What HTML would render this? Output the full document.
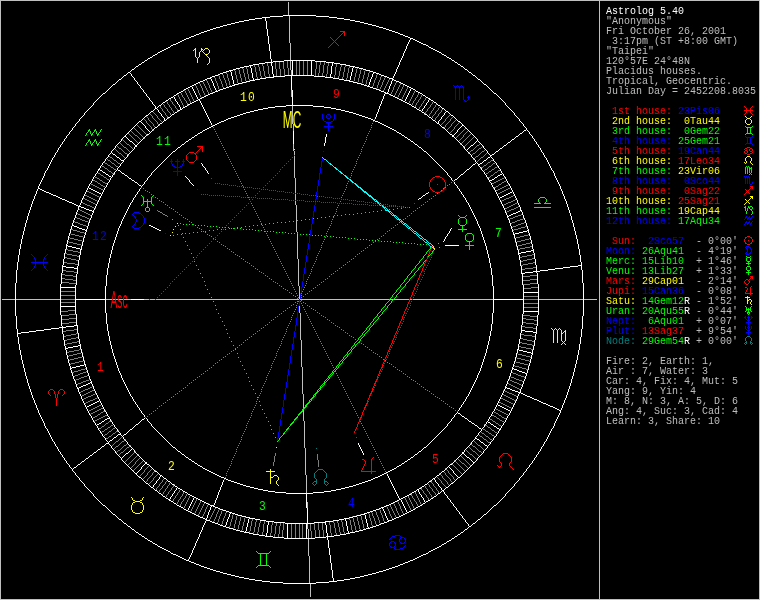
<!DOCTYPE html>
<html lang="en"><head><meta charset="utf-8"><title>Astrolog 5.40 - Anonymous, Taipei</title>
<style>
html,body{margin:0;padding:0;background:#000;}
body{width:760px;height:600px;overflow:hidden;position:relative;}
#chart{position:absolute;left:0;top:0;width:760px;height:600px;display:block;will-change:transform;}
#chart path{fill:none;stroke-width:1;shape-rendering:crispEdges;}
#chart path.h{transform:translate(0,.5px);}
#chart path.v{transform:translate(.5px,0);}
#chart text{font-family:"Liberation Mono",monospace;text-anchor:middle;}
#chart text.hn{font-size:13.3px;}
#chart text.cu{font-family:"Liberation Sans",sans-serif;font-size:23.7px;}
#side{position:absolute;left:606px;top:0;width:154px;height:600px;will-change:transform;}
.r{position:absolute;left:0;white-space:pre;font-family:"Liberation Mono",monospace;font-size:10.6px;line-height:10px;height:10px;
transform-origin:0 0;transform:translateY(2px) scaleX(0.9434);color:#bfbfbf;}
</style></head><body>
<svg id="chart" width="760" height="600" viewBox="0 0 760 600">
<rect width="760" height="600" fill="#000"/>
<path class="h" stroke="#007f7f" d="M747 336h3M745 342h2M750 342h2M318 469h5M314 481h3M324 481h3"/>
<path class="v" stroke="#007f7f" d="M312 483v1M313 482v1M313 484v1M314 473v5M314 485v1M315 472v1M315 478v1M315 484v1M316 448v1M316 471v1M316 479v2M316 482v2M317 470v1M323 470v1M324 471v1M324 479v2M324 482v2M325 472v1M325 478v1M325 484v1M326 473v5M326 485v1M327 482v1M327 484v1M328 483v1M744 343v1M745 338v3M745 344v1M746 337v1M746 341v1M746 343v1M750 337v1M750 341v1M750 343v1M751 338v3M751 344v1M752 343v1"/>
<path class="h" stroke="#bfbfbf" d="M0 0h760M2 299h13M16 299h44M106 299h25M144 299h5M150 299h5M156 299h143M300 299h89M390 299h3M394 299h15M410 299h2M413 299h80M539 299h44M584 299h13M0 599h760"/>
<path class="v" stroke="#bfbfbf" d="M0 1v598M288 2v13M289 16v27M290 43v17M290 61v9M291 70v5M291 90v7M292 106v18M293 124v7M293 144v7M294 151v4M294 156v22M295 178v15M295 194v6M295 201v4M296 205v27M297 232v1M297 234v25M298 259v27M299 286v13M299 306v7M300 313v27M301 340v27M302 367v27M303 394v14M303 410v11M304 421v27M305 448v27M306 475v18M307 502v6M307 524v5M308 529v9M308 539v17M309 556v27M310 584v13M599 1v598M759 1v598"/>
<path class="h" stroke="#7f7f7f" d="M135 135h2M127 144h2M477 145h2M124 147h2M119 148h2M479 148h2M471 150h2M482 151h2M119 153h2M125 153h2M473 153h2M476 156h2M110 157h2M481 157h2M108 160h2M114 160h2M491 160h2M488 162h2M105 163h2M112 163h2M118 163h2M493 163h2M108 165h2M484 165h2M102 166h2M116 166h2M489 166h2M111 167h2M481 167h2M495 167h2M105 168h2M114 169h2M485 169h2M492 169h2M498 170h2M109 171h2M489 171h2M495 172h2M98 173h2M112 173h2M486 173h2M101 175h2M491 175h2M95 177h2M104 177h2M488 177h2M97 178h2M502 178h2M107 179h2M500 179h2M93 180h2M100 180h2M498 180h2M95 181h2M496 181h2M504 181h2M103 182h2M494 182h2M502 182h2M98 183h2M105 183h2M492 183h2M91 184h2M499 184h2M93 185h2M101 185h2M506 185h2M95 186h2M103 186h2M496 186h2M504 186h2M97 187h2M494 187h2M502 187h2M99 188h2M500 188h2M508 188h2M101 189h2M498 189h2M506 189h2M496 190h2M504 190h2M87 191h2M502 191h2M89 192h2M500 192h2M91 193h2M498 193h2M93 194h2M85 195h2M95 195h2M87 196h2M97 196h2M511 196h2M89 197h2M509 197h2M83 198h2M91 198h2M506 198h3M85 199h2M93 199h2M504 199h2M87 200h2M95 200h2M502 200h2M513 200h2M89 201h2M511 201h2M91 202h2M508 202h3M83 203h2M93 203h2M506 203h2M515 203h2M85 204h2M504 204h2M513 204h2M87 205h3M511 205h2M90 206h2M509 206h2M92 207h2M507 207h2M516 207h2M505 208h2M514 208h2M511 209h3M80 210h2M509 210h2M82 211h2M158 211h2M507 211h2M84 212h2M160 212h2M86 213h2M78 214h2M88 214h2M163 214h2M80 215h2M165 215h2M518 215h3M82 216h3M515 216h3M85 217h2M513 217h2M77 218h3M87 218h2M510 218h3M80 219h2M520 219h3M82 220h3M517 220h3M85 221h3M515 221h2M75 222h3M512 222h3M78 223h2M521 223h3M80 224h3M518 224h3M83 225h3M516 225h2M513 226h3M525 226h2M521 227h4M518 228h3M71 229h2M514 229h4M73 230h4M77 231h3M80 232h4M71 234h4M75 235h4M524 235h4M79 236h4M520 236h4M516 237h4M70 238h4M74 239h4M525 239h4M78 240h4M521 240h4M517 241h4M69 242h4M73 243h4M526 243h4M77 244h4M522 244h4M518 245h4M530 246h2M525 247h5M520 248h5M66 249h2M518 249h2M68 250h5M73 251h5M78 252h2M65 253h2M67 254h5M532 254h2M72 255h5M527 255h5M77 256h2M522 256h5M65 257h2M520 257h2M67 258h4M532 258h2M71 259h5M527 259h5M76 260h2M523 260h4M521 261h2M64 262h3M533 262h2M67 263h8M528 263h5M75 264h3M523 264h5M521 265h2M533 267h3M525 268h8M522 269h3M63 270h3M66 271h8M74 272h3M62 274h3M65 275h8M530 275h7M73 276h3M523 276h7M62 278h3M65 279h8M530 279h7M73 280h3M523 280h7M62 282h7M69 283h7M530 283h7M523 284h7M531 287h7M524 288h7M61 291h14M61 295h14M524 296h14M61 299h14M524 299h14M297 301h2M61 302h14M524 303h14M524 307h14M68 310h7M61 311h7M69 314h7M62 315h7M523 315h7M530 316h7M69 318h7M523 318h3M62 319h7M526 319h8M534 320h3M69 322h7M523 322h3M62 323h7M526 323h8M534 324h3M522 326h3M525 327h8M533 328h3M74 329h3M66 330h8M63 331h3M76 333h2M71 334h5M521 334h3M66 335h5M524 335h8M64 336h2M532 336h3M76 337h2M71 338h5M521 338h2M67 339h4M523 339h4M65 340h2M527 340h5M77 341h2M532 341h2M72 342h5M520 342h2M67 343h5M522 343h5M65 344h2M527 344h5M532 345h2M519 346h2M521 347h5M526 348h5M79 349h2M531 349h2M74 350h5M69 351h5M67 352h2M77 353h4M73 354h4M518 354h4M69 355h4M522 355h4M526 356h4M78 357h4M74 358h4M517 358h4M70 359h4M521 359h4M525 360h4M79 361h4M75 362h4M516 362h4M71 363h4M520 363h4M524 364h4M515 366h4M519 367h3M522 368h4M81 369h4M526 369h2M78 370h3M74 371h4M72 372h2M83 372h3M80 373h3M513 373h3M78 374h2M516 374h2M75 375h3M518 375h3M84 376h3M521 376h3M81 377h3M511 377h3M79 378h2M514 378h2M76 379h3M516 379h3M86 380h3M510 380h2M519 380h3M83 381h3M512 381h2M81 382h2M514 382h3M78 383h3M517 383h2M509 384h2M519 384h2M511 385h2M513 386h2M90 387h2M515 387h2M88 388h2M517 388h2M85 389h3M83 390h2M92 390h2M81 391h2M90 391h2M505 391h2M88 392h2M507 392h2M86 393h2M509 393h3M84 394h2M93 394h2M512 394h2M82 395h2M91 395h2M504 395h2M514 395h2M88 396h3M506 396h2M86 397h2M508 397h2M84 398h2M95 398h2M501 398h2M510 398h2M93 399h2M503 399h2M512 399h2M90 400h3M505 400h2M514 400h2M88 401h2M507 401h2M86 402h2M499 402h2M509 402h2M501 403h2M511 403h2M503 404h2M99 405h2M505 405h2M97 406h2M507 406h2M95 407h2M509 407h2M93 408h2M101 408h2M91 409h2M99 409h2M496 409h2M89 410h2M97 410h2M498 410h2M95 411h2M103 411h2M500 411h2M93 412h2M101 412h2M494 412h2M502 412h2M91 413h2M496 413h2M504 413h2M98 414h2M506 414h2M105 415h2M492 415h2M499 415h2M95 416h2M103 416h2M494 416h2M93 417h2M101 417h2M502 417h2M99 418h2M497 418h2M504 418h2M97 419h2M490 419h2M95 420h2M500 420h2M109 421h2M493 421h2M502 421h2M106 423h2M496 423h2M111 425h2M485 425h2M499 425h2M102 426h2M108 427h2M488 427h2M99 428h2M113 428h2M105 429h2M483 429h2M492 430h2M102 431h2M109 431h2M116 431h2M486 431h2M495 432h2M113 433h2M482 433h2M489 433h2M105 434h2M492 435h2M109 436h2M480 436h2M486 436h2M106 438h2M484 439h2M490 439h2M116 441h2M122 441h2M488 442h2M124 445h2M478 445h2M116 446h2M473 446h2M127 447h2M118 450h2M473 451h2M479 451h2M121 452h2M470 454h2M462 463h2"/>
<path class="v" stroke="#7f7f7f" d="M68 241v1M68 356v1M69 237v1M69 360v1M70 233v1M70 364v1M74 221v1M74 376v1M75 380v1M76 217v1M77 213v1M77 384v1M79 209v1M80 392v1M81 245v1M82 202v1M82 241v1M82 352v1M83 237v1M83 356v1M83 399v1M84 233v1M84 360v1M85 368v1M85 403v1M86 226v1M86 371v1M87 375v1M88 222v1M89 219v1M89 379v1M90 215v1M90 414v1M92 386v1M94 421v1M95 204v1M95 208v1M95 393v1M97 182v1M97 201v1M97 397v1M97 415v1M99 179v1M99 197v1M100 174v1M100 184v1M100 413v1M101 427v1M101 432v1M102 181v1M103 176v1M104 162v1M104 167v1M104 425v1M104 430v1M104 435v1M105 410v1M105 424v1M106 178v1M107 159v1M107 164v1M107 169v1M107 428v1M107 433v1M108 170v1M108 422v1M108 432v1M108 437v1M109 156v1M110 161v1M110 166v1M110 426v1M111 162v1M111 172v1M111 420v1M111 430v1M111 435v1M112 158v1M112 429v1M112 434v1M112 445v1M113 159v1M113 168v1M113 444v1M114 164v1M114 174v1M114 443v1M114 448v1M115 149v1M115 165v1M115 432v1M115 442v1M115 447v1M116 150v1M116 161v1M116 452v1M117 146v1M117 151v1M117 162v1M117 451v1M118 147v1M118 152v1M118 430v1M118 440v1M118 445v1M119 439v1M119 444v1M119 454v1M120 143v1M120 438v1M120 443v1M120 449v1M120 453v1M121 144v1M121 149v1M121 154v1M121 437v1M121 442v1M121 448v1M122 139v1M122 145v1M122 150v1M122 155v1M122 447v1M123 140v1M123 146v1M123 151v1M123 156v1M123 446v1M123 451v1M124 141v1M124 152v1M124 157v1M124 440v1M124 450v1M125 142v1M125 439v1M125 449v1M125 461v1M126 143v1M126 148v1M126 444v1M126 448v1M126 460v1M127 149v1M127 154v1M127 459v1M128 133v1M128 150v1M128 155v1M128 458v1M128 464v1M129 134v1M129 145v1M129 151v1M129 446v1M129 457v1M129 463v1M130 135v1M130 146v1M130 445v1M130 456v1M130 462v1M131 131v1M131 136v1M131 147v1M131 455v1M131 461v1M131 467v1M132 132v1M132 137v1M132 148v1M132 454v1M132 460v1M132 466v1M133 133v1M133 138v1M133 453v1M133 459v1M133 465v1M133 470v1M134 128v1M134 134v1M134 139v1M134 452v1M134 458v1M134 464v1M134 469v1M135 129v1M135 140v1M135 451v1M135 457v1M135 462v2M135 468v1M136 130v1M136 141v1M136 456v1M136 461v1M136 467v1M137 125v1M137 131v1M137 136v1M137 142v1M137 455v1M137 460v1M137 466v1M138 126v1M138 132v1M138 137v1M138 454v1M138 459v1M138 465v1M139 127v1M139 133v1M139 138v1M139 458v1M139 464v1M139 476v1M140 128v1M140 134v1M140 139v1M140 463v1M140 475v1M141 129v1M141 135v1M141 187v1M141 462v1M141 474v1M142 130v1M142 136v1M142 461v1M142 473v1M143 131v1M143 137v1M143 188v1M143 472v1M143 478v1M144 119v1M144 132v1M144 138v1M144 470v2M144 477v1M145 120v1M145 133v1M145 190v1M145 417v1M145 469v1M145 476v1M146 116v1M146 121v2M146 134v1M146 468v1M146 475v1M146 481v1M147 117v1M147 123v1M147 135v1M147 191v1M147 416v1M147 467v1M147 473v2M147 479v2M148 118v2M148 124v1M148 466v1M148 472v1M148 478v1M149 120v1M149 125v1M149 192v1M149 414v1M149 471v1M149 477v1M149 483v1M150 114v1M150 121v1M150 126v1M150 470v1M150 476v1M150 482v1M151 115v1M151 122v1M151 127v2M151 194v1M151 413v1M151 469v1M151 475v1M151 481v1M152 116v2M152 123v1M152 129v1M152 473v2M152 480v1M153 112v1M153 118v1M153 124v2M153 130v1M153 411v1M153 472v1M153 478v2M154 113v1M154 119v1M154 126v1M154 471v1M154 477v1M155 114v1M155 120v1M155 197v1M155 410v1M155 470v1M155 476v1M156 115v1M156 121v1M156 475v1M156 488v2M157 116v2M157 122v2M157 198v1M157 210v1M157 408v1M157 474v1M157 487v1M158 118v1M158 124v1M158 486v1M159 119v1M159 125v1M159 200v1M159 406v1M159 484v2M159 490v2M160 106v2M160 120v1M160 483v1M160 489v1M161 108v1M161 121v1M161 201v1M161 405v1M161 482v1M161 488v1M162 109v2M162 213v1M162 480v2M162 486v2M162 494v1M163 104v1M163 111v1M163 202v1M163 403v1M163 479v1M163 485v1M163 492v2M164 105v2M164 112v1M164 484v1M164 491v1M165 107v1M165 113v2M165 204v1M165 402v1M165 482v2M165 489v2M166 101v1M166 108v1M166 115v1M166 481v1M166 488v1M166 495v2M167 102v2M167 109v2M167 116v2M167 205v1M167 216v1M167 400v1M167 486v2M167 494v1M168 104v1M168 111v1M168 118v1M168 485v1M168 492v2M169 105v2M169 112v1M169 207v1M169 399v1M169 483v2M169 491v1M170 99v2M170 107v1M170 113v2M170 490v1M171 101v1M171 108v2M171 208v1M171 397v1M171 488v2M172 102v2M172 110v1M172 487v1M173 104v1M173 111v2M173 209v1M173 396v1M173 485v2M173 499v2M174 105v1M174 484v1M174 498v1M175 106v2M175 211v1M175 394v1M175 496v2M176 108v1M176 495v1M177 94v1M177 109v2M177 212v1M177 393v1M177 493v2M177 502v2M178 95v2M178 111v1M178 492v1M178 500v2M179 97v2M179 214v1M179 391v1M179 490v2M179 499v1M180 99v2M180 497v2M180 504v2M181 93v2M181 101v2M181 215v1M181 390v1M181 496v1M181 502v2M182 95v2M182 103v2M182 494v2M182 501v1M183 97v1M183 105v2M183 217v1M183 388v1M183 492v2M183 499v2M184 90v1M184 98v2M184 498v1M184 506v2M185 91v2M185 100v1M185 218v1M185 387v1M185 496v2M185 504v2M186 93v2M186 101v2M186 494v2M186 502v2M187 95v2M187 103v2M187 219v1M187 385v1M187 500v2M188 89v2M188 97v2M188 105v1M188 498v2M189 91v2M189 99v2M189 221v1M189 383v1M189 496v2M190 93v2M190 101v2M190 511v1M191 95v2M191 222v1M191 382v1M191 509v2M192 97v2M192 507v2M193 99v2M193 224v1M193 380v1M193 505v2M194 503v2M194 513v1M195 85v1M195 379v1M195 501v2M195 511v2M196 86v2M196 499v2M196 509v2M197 88v2M197 227v1M197 377v1M197 507v2M198 90v3M198 505v2M198 514v2M199 83v1M199 93v2M199 228v1M199 376v1M199 503v2M199 512v2M200 84v2M200 95v2M200 501v2M200 510v2M201 86v2M201 97v1M201 229v1M201 374v1M201 508v2M202 88v3M202 506v2M202 516v1M203 82v2M203 91v2M203 231v1M203 373v1M203 504v2M203 514v2M204 84v2M204 93v2M204 503v1M204 512v2M205 86v2M205 95v1M205 232v1M205 371v1M205 509v3M206 80v1M206 88v2M206 507v2M207 81v2M207 90v2M207 234v1M207 370v1M207 505v2M208 83v2M208 92v2M208 503v1M209 85v3M209 235v1M209 368v1M209 519v1M210 88v2M210 517v2M211 90v2M211 236v1M211 367v1M211 515v2M212 92v1M212 125v1M212 513v2M213 127v1M213 238v1M213 365v1M213 511v2M213 521v1M214 77v1M214 129v1M214 509v2M214 519v2M215 78v3M215 131v1M215 239v1M215 363v1M215 508v1M215 517v2M216 81v2M216 133v1M216 514v3M217 83v3M217 135v1M217 241v1M217 362v1M217 512v2M217 522v1M218 75v1M218 86v3M218 137v1M218 510v2M218 519v3M219 76v3M219 89v1M219 139v1M219 242v1M219 360v1M219 509v1M219 516v3M220 79v2M220 141v1M220 514v2M221 81v3M221 143v1M221 244v1M221 359v1M221 511v3M221 524v1M222 74v1M222 84v3M222 145v1M222 510v1M222 521v3M223 75v3M223 87v1M223 147v1M223 245v1M223 357v1M223 518v3M224 78v2M224 149v1M224 479v1M224 516v2M225 80v3M225 151v1M225 246v1M225 356v1M225 477v1M225 513v3M226 72v2M226 83v3M226 153v1M226 473v1M226 475v1M226 512v1M227 74v4M227 86v1M227 155v1M227 248v1M227 354v1M227 471v1M228 78v3M228 157v1M228 469v1M229 81v4M229 159v1M229 249v1M229 353v1M229 467v1M229 526v2M230 85v1M230 161v1M230 465v1M230 522v4M231 163v1M231 251v1M231 351v1M231 461v1M231 463v1M231 519v3M232 165v1M232 459v1M232 515v4M233 167v1M233 252v1M233 350v1M233 457v1M233 514v1M233 528v1M234 70v1M234 169v1M234 455v1M234 524v4M235 71v4M235 171v1M235 254v1M235 348v1M235 453v1M235 520v4M236 75v4M236 173v1M236 449v1M236 451v1M236 516v4M237 79v4M237 175v1M237 255v1M237 347v1M237 447v1M237 515v1M237 529v1M238 69v1M238 84v1M238 177v1M238 445v1M238 525v4M239 70v4M239 179v1M239 256v1M239 345v1M239 443v1M239 521v4M240 74v4M240 181v1M240 441v1M240 517v4M241 78v4M241 183v1M241 258v1M241 344v1M241 437v1M241 439v1M241 516v1M241 530v1M242 68v1M242 83v1M242 185v1M242 435v1M242 526v4M243 69v4M243 187v1M243 259v1M243 342v1M243 433v1M243 522v4M244 73v4M244 189v1M244 431v1M244 518v4M245 77v4M245 191v1M245 261v1M245 340v1M245 429v1M245 517v1M246 67v2M246 82v1M246 193v1M246 425v1M246 427v1M247 69v5M247 195v1M247 262v1M247 339v1M247 423v1M248 74v5M248 197v1M248 421v1M249 79v2M249 199v1M249 263v1M249 337v1M249 419v1M249 531v2M250 417v1M250 526v5M251 203v1M251 265v1M251 336v1M251 413v1M251 415v1M251 521v5M252 205v1M252 411v1M252 519v2M253 207v1M253 266v1M253 334v1M253 409v1M253 532v2M254 65v2M254 209v1M254 407v1M254 527v5M255 67v5M255 211v1M255 268v1M255 333v1M255 405v1M255 522v5M256 72v5M256 213v1M256 401v1M256 403v1M256 520v2M257 77v2M257 215v1M257 269v1M257 331v1M257 399v1M257 532v2M258 65v2M258 217v1M258 397v1M258 527v5M259 67v4M259 219v1M259 271v1M259 330v1M259 395v1M259 523v4M260 71v5M260 221v1M260 393v1M260 521v2M261 76v2M261 223v1M261 272v1M261 328v1M261 389v1M261 391v1M262 64v2M262 225v1M262 387v1M262 532v3M263 66v5M263 227v1M263 273v1M263 327v1M263 385v1M263 524v8M264 71v5M264 229v1M264 383v1M264 521v3M265 76v2M265 231v1M265 275v1M265 325v1M265 381v1M266 233v1M266 377v1M266 379v1M267 63v3M267 235v1M267 276v1M267 324v1M267 375v1M268 66v8M268 237v1M268 373v1M269 74v3M269 239v1M269 278v1M269 322v1M269 371v1M270 241v1M270 369v1M270 533v3M271 243v1M271 279v1M271 320v1M271 365v1M271 367v1M271 525v8M272 245v1M272 363v1M272 522v3M273 247v1M273 281v1M273 319v1M273 361v1M273 462v4M274 249v1M274 359v1M274 456v6M274 534v3M275 62v7M275 251v1M275 282v1M275 317v1M275 357v1M275 453v3M275 526v8M276 69v7M276 253v1M276 353v1M276 355v1M276 523v3M277 255v1M277 283v1M277 316v1M277 351v1M278 257v1M278 349v1M278 534v3M279 62v7M279 259v1M279 285v1M279 314v1M279 347v1M279 526v8M280 69v7M280 261v1M280 345v1M280 523v3M281 263v1M281 286v1M281 313v1M281 341v1M281 343v1M282 265v1M282 339v1M282 530v7M283 62v7M283 267v1M283 288v1M283 311v1M283 337v1M283 523v7M284 69v7M284 269v1M284 335v1M285 271v1M285 289v1M285 310v1M285 333v1M286 273v1M286 329v1M286 331v1M287 61v7M287 275v1M287 290v1M287 308v1M287 327v1M288 68v7M288 277v1M288 325v1M289 279v1M289 292v1M289 307v1M289 323v1M290 281v1M290 321v1M291 283v1M291 293v1M291 305v1M291 317v1M291 319v1M291 524v14M292 285v1M292 315v1M293 287v1M293 295v1M293 304v1M293 313v1M294 289v1M294 311v1M295 291v1M295 296v1M295 302v1M295 309v1M295 524v14M296 61v14M296 293v1M296 305v1M296 307v1M297 295v1M297 298v1M297 303v1M298 297v1M299 61v14M299 524v14M300 301v1M301 293v1M301 295v1M301 297v1M301 300v1M301 303v1M302 291v1M302 305v1M302 524v14M303 61v14M303 289v1M303 296v1M303 302v1M303 307v1M304 287v1M304 309v1M305 285v1M305 294v1M305 303v1M305 311v1M306 281v1M306 283v1M306 313v1M307 61v14M307 279v1M307 293v1M307 305v1M307 315v1M308 277v1M308 317v1M309 275v1M309 291v1M309 306v1M309 319v1M310 273v1M310 321v1M310 524v7M311 269v1M311 271v1M311 290v1M311 308v1M311 323v1M311 531v7M312 267v1M312 325v1M313 265v1M313 288v1M313 309v1M313 327v1M314 263v1M314 329v1M314 523v7M315 69v7M315 261v1M315 287v1M315 310v1M315 331v1M315 530v7M316 62v7M316 257v1M316 259v1M316 333v1M317 255v1M317 285v1M317 312v1M317 335v1M317 454v6M318 73v3M318 253v1M318 337v1M318 460v7M318 523v7M319 65v8M319 251v1M319 284v1M319 313v1M319 339v1M319 530v7M320 62v3M320 249v1M320 341v1M321 245v1M321 247v1M321 282v1M321 315v1M321 343v1M322 73v3M322 243v1M322 345v1M322 523v7M323 65v8M323 241v1M323 281v1M323 316v1M323 347v1M323 530v7M324 62v3M324 239v1M324 349v1M325 237v1M325 279v1M325 317v1M325 351v1M326 74v3M326 233v1M326 235v1M326 353v1M327 66v8M327 231v1M327 278v1M327 319v1M327 355v1M328 63v3M328 229v1M328 357v1M329 227v1M329 276v1M329 320v1M329 359v1M329 522v3M330 225v1M330 361v1M330 525v8M331 221v1M331 223v1M331 274v1M331 322v1M331 363v1M331 533v3M332 219v1M332 365v1M333 217v1M333 273v1M333 323v1M333 367v1M333 521v2M334 75v3M334 215v1M334 523v5M335 67v8M335 213v1M335 271v1M335 325v1M335 371v1M335 528v5M336 64v3M336 209v1M336 211v1M336 373v1M336 533v2M337 207v1M337 270v1M337 326v1M337 375v1M337 521v2M338 76v2M338 205v1M338 377v1M338 523v4M339 71v5M339 268v1M339 327v1M339 379v1M339 527v5M340 67v4M340 201v1M340 381v1M340 532v2M341 65v2M341 197v1M341 267v1M341 329v1M341 383v1M341 520v2M342 77v2M342 195v1M342 385v1M342 522v5M343 72v5M343 193v1M343 265v1M343 330v1M343 387v1M343 527v5M344 67v5M344 191v1M344 389v1M344 532v2M345 65v2M345 189v1M345 264v1M345 332v1M345 391v1M346 78v2M346 185v1M346 187v1M346 393v1M347 73v5M347 183v1M347 262v1M347 333v1M347 395v1M348 68v5M348 181v1M348 397v1M349 66v2M349 261v1M349 335v1M349 399v1M349 518v2M350 177v1M350 401v1M350 520v5M351 173v1M351 175v1M351 259v1M351 336v1M351 403v1M351 525v5M352 171v1M352 405v1M352 516v1M352 530v2M353 81v1M353 169v1M353 258v1M353 337v1M353 407v1M353 518v4M354 77v4M354 167v1M354 409v1M354 522v4M355 73v4M355 165v1M355 256v1M355 339v1M355 411v1M355 526v4M356 69v4M356 161v1M356 163v1M356 413v1M356 515v1M356 530v1M357 68v1M357 82v1M357 159v1M357 254v1M357 415v1M357 517v4M358 78v4M358 157v1M358 417v1M358 521v4M359 74v4M359 155v1M359 253v1M359 342v1M359 525v4M360 70v4M360 153v1M360 421v1M360 514v1M360 529v1M361 69v1M361 83v1M361 149v1M361 151v1M361 251v1M361 343v1M361 423v1M361 516v4M362 79v4M362 147v1M362 425v1M362 520v4M363 75v4M363 145v1M363 250v1M363 344v1M363 427v1M363 524v4M364 71v4M364 143v1M364 429v1M364 528v1M365 70v1M365 84v1M365 141v1M365 248v1M365 346v1M365 431v1M366 80v4M366 137v1M366 139v1M366 433v1M367 77v3M367 135v1M367 247v1M367 347v1M367 435v1M368 73v4M368 133v1M368 437v1M368 513v1M369 71v2M369 131v1M369 245v1M369 349v1M369 439v1M369 514v4M370 129v1M370 441v1M370 518v3M371 125v1M371 127v1M371 244v1M371 350v1M371 443v1M371 512v1M371 521v4M372 86v1M372 123v1M372 445v1M372 513v3M372 525v2M373 83v3M373 121v1M373 242v1M373 352v1M373 447v1M373 516v2M374 80v3M374 119v1M374 449v1M374 518v3M375 78v2M375 241v1M375 353v1M375 451v1M375 511v1M375 521v3M376 75v3M376 88v1M376 453v1M376 512v3M376 524v1M377 74v1M377 85v3M377 239v1M377 354v1M377 455v1M377 515v2M378 82v3M378 457v1M378 517v3M379 80v2M379 89v1M379 238v1M379 356v1M379 459v1M379 509v1M379 520v3M380 77v3M380 87v2M380 461v1M380 510v3M380 523v1M381 76v1M381 85v2M381 236v1M381 357v1M381 463v1M381 513v2M382 82v3M382 465v1M382 515v3M383 80v2M383 90v1M383 235v1M383 359v1M383 467v1M383 518v3M384 78v2M384 88v2M384 469v1M384 521v1M385 77v1M385 86v2M385 233v1M385 360v1M385 471v1M386 84v2M386 473v1M386 506v1M387 82v2M387 231v1M387 362v1M387 507v2M388 80v2M388 509v2M389 79v1M389 230v1M389 363v1M389 511v3M390 95v1M390 505v2M390 514v2M391 92v2M391 228v1M391 364v1M391 507v2M391 516v2M392 90v2M392 509v2M392 518v1M393 87v3M393 227v1M393 366v1M393 503v1M393 511v2M394 85v2M394 95v1M394 504v2M394 513v2M395 83v2M395 93v2M395 225v1M395 367v1M395 506v2M395 515v2M396 82v1M396 91v2M396 508v3M397 89v2M397 97v1M397 224v1M397 369v1M397 501v1M397 511v2M398 87v2M398 95v2M398 502v2M398 513v2M399 85v2M399 93v2M399 222v1M399 370v1M399 504v2M399 515v1M400 83v2M400 91v2M400 506v3M401 89v2M401 99v1M401 221v1M401 371v1M401 509v2M402 87v2M402 97v2M402 511v2M403 85v2M403 95v2M403 219v1M403 373v1M403 513v1M404 93v2M405 91v2M405 218v1M405 374v1M405 498v2M406 89v2M406 500v2M407 87v2M407 216v1M407 376v1M407 502v2M408 496v2M408 504v2M409 101v2M409 215v1M409 377v1M409 498v2M409 506v2M410 99v2M410 493v1M410 500v2M410 508v2M411 97v2M411 213v1M411 379v1M411 494v2M411 502v2M412 95v2M412 103v2M412 496v2M412 504v2M413 93v2M413 101v2M413 211v1M413 380v1M413 498v1M413 506v2M414 91v2M414 100v1M414 499v2M414 508v1M415 98v2M415 105v2M415 210v1M415 381v1M415 492v2M415 501v1M416 97v1M416 103v2M416 494v2M416 502v2M417 95v2M417 102v1M417 208v1M417 383v1M417 496v2M417 504v2M418 93v2M418 100v2M418 498v2M419 99v1M419 107v2M419 207v1M419 384v1M419 500v2M420 97v2M420 106v1M420 487v1M420 502v2M421 95v2M421 104v2M421 205v1M421 386v1M421 488v2M421 504v1M422 103v1M422 490v1M423 101v2M423 204v1M423 387v1M423 491v2M424 100v1M424 114v1M424 493v1M425 98v2M425 112v2M425 202v1M425 389v1M425 486v2M425 494v1M426 111v1M426 488v1M426 495v2M427 109v2M427 201v1M427 390v1M427 489v2M427 497v1M428 108v1M428 484v1M428 491v1M428 498v2M429 107v1M429 114v2M429 199v1M429 391v1M429 485v2M429 492v2M430 105v2M430 113v1M430 480v1M430 487v1M430 494v1M431 104v1M431 111v2M431 198v1M431 393v1M431 481v2M431 488v1M431 495v2M432 102v2M432 110v1M432 116v2M432 483v1M432 489v2M432 497v1M433 108v2M433 115v1M433 196v1M433 394v1M433 484v2M433 491v1M434 107v1M434 114v1M434 486v1M434 492v1M435 105v2M435 112v2M435 118v2M435 195v1M435 396v1M435 487v1M435 493v2M436 104v1M436 111v1M436 117v1M436 488v2M437 110v1M437 116v1M437 193v1M437 397v1M437 477v1M437 490v1M438 108v2M438 114v2M438 478v1M438 491v2M439 107v1M439 113v1M439 398v1M439 473v1M439 479v1M440 112v1M440 474v1M440 480v1M441 110v2M441 124v1M441 190v1M441 400v1M441 475v1M441 481v2M442 109v1M442 123v1M442 476v2M442 483v1M443 122v1M443 128v1M443 188v1M443 401v1M443 478v1M443 484v1M444 121v1M444 127v1M444 472v1M444 479v1M444 485v1M445 119v2M445 125v2M445 187v1M445 403v1M445 468v1M445 473v2M445 480v1M445 486v1M446 118v1M446 124v1M446 469v1M446 475v1M446 481v1M447 117v1M447 123v1M447 129v1M447 185v1M447 404v1M447 470v1M447 476v1M447 482v2M448 116v1M448 122v1M448 128v1M448 471v2M448 477v1M448 484v1M449 115v1M449 121v1M449 127v1M449 184v1M449 406v1M449 473v1M449 478v1M450 119v2M450 126v1M450 132v1M450 474v1M450 479v2M451 118v1M451 124v2M451 131v1M451 182v1M451 407v1M451 463v1M451 475v1M451 481v1M452 117v1M452 123v1M452 130v1M452 464v1M452 476v1M452 482v1M453 122v1M453 129v1M453 181v1M453 408v1M453 465v1M453 477v2M454 121v1M454 127v2M454 460v1M454 466v1M454 479v1M455 120v1M455 126v1M455 410v1M455 461v1M455 467v1M456 125v1M456 137v1M456 462v1M456 468v1M457 124v1M457 136v1M457 411v1M457 463v1M457 469v1M458 123v1M458 135v1M458 459v1M458 464v1M458 470v1M459 122v1M459 134v1M459 140v1M459 460v1M459 465v1M459 471v1M460 133v1M460 139v1M460 144v1M460 461v1M460 466v1M460 472v1M461 132v1M461 138v1M461 143v1M461 456v1M461 462v1M461 467v1M461 473v1M462 131v1M462 137v1M462 142v1M462 457v1M462 468v1M463 130v1M463 135v2M463 141v1M463 147v1M463 458v1M463 469v1M464 129v1M464 134v1M464 140v1M464 146v1M464 459v1M464 464v1M464 470v1M465 128v1M465 133v1M465 139v1M465 145v1M465 460v1M465 465v1M466 132v1M466 138v1M466 144v1M466 450v1M466 461v1M466 466v1M467 131v1M467 137v1M467 143v1M467 451v1M467 462v1M467 467v1M468 136v1M468 142v1M468 153v1M468 452v1M468 463v1M469 135v1M469 141v1M469 152v1M469 447v1M469 453v1M469 464v1M470 134v1M470 140v1M470 151v1M470 443v1M470 448v1M470 465v1M471 139v1M471 444v1M471 449v1M472 138v1M472 154v1M472 445v1M472 450v1M472 455v1M473 137v1M473 149v1M473 159v1M473 456v1M474 148v1M474 158v1M474 441v1M474 457v1M475 147v1M475 152v1M475 157v1M475 442v1M475 447v1M475 452v1M475 458v1M476 146v1M476 151v1M476 443v1M476 448v1M476 453v1M476 459v1M477 150v1M477 161v1M477 444v1M477 449v1M477 454v1M478 149v1M478 155v1M478 160v1M478 450v1M478 455v1M479 144v1M479 154v1M479 159v1M479 435v1M480 153v1M480 158v1M480 168v1M480 446v1M481 147v1M481 152v1M481 432v1M481 447v1M481 452v1M482 146v1M482 437v1M482 448v1M483 156v1M483 166v1M483 438v1M483 449v1M484 150v1M484 155v1M484 170v1M484 424v1M484 434v1M485 154v1M485 430v1M485 435v1M486 153v1M486 164v1M486 440v1M487 163v1M487 168v1M487 178v1M487 426v1M487 441v1M488 167v1M488 172v1M488 432v1M488 437v1M489 438v1M490 161v1M490 176v1M490 428v1M491 165v1M491 170v1M491 429v1M491 434v1M492 164v1M492 420v1M493 174v1M493 188v1M494 168v1M494 173v1M494 431v1M494 436v1M495 422v1M496 417v1M497 166v1M497 171v1M498 185v1M498 414v1M498 424v1M499 419v1M501 183v1M501 201v1M501 416v1M503 205v1M503 390v1M503 394v1M504 177v1M506 212v1M508 184v1M508 383v1M509 219v1M509 379v1M510 376v1M511 223v1M511 408v1M512 227v1M512 372v1M513 195v1M513 230v1M513 404v1M514 238v1M514 365v1M515 199v1M515 242v1M515 361v1M516 246v1M516 357v1M516 396v1M517 353v1M518 206v1M519 389v1M521 214v1M521 385v1M522 381v1M523 218v1M524 222v1M524 377v1M528 234v1M528 365v1M529 238v1M529 361v1M530 242v1M530 357v1"/>
<path class="h" stroke="#ff0000" d="M340 31h5M343 32h2M744 110h9M197 146h6M201 147h2M747 147h3M745 148h2M750 148h2M745 150h2M750 151h2M189 152h5M194 153h2M745 153h2M750 153h2M747 154h3M189 162h5M435 176h5M433 177h2M440 177h2M750 186h3M751 187h2M433 191h2M440 191h2M435 192h5M747 236h3M745 237h2M750 237h2M745 243h2M750 243h2M747 244h3M750 276h3M751 277h2M746 279h2M746 284h2M745 287h2M745 293h8M389 349h2M388 351h2M384 361h2M383 363h2M382 365h2M381 367h2M379 373h2M378 375h2M377 377h2M376 379h2M375 381h2M374 383h2M374 385h2M373 387h2M50 389h3M60 389h3M372 389h2M371 391h2M370 393h2M369 395h2M367 401h2M366 403h2M365 405h2M364 407h2M360 417h2M359 419h2M503 453h5M362 459h2M361 471h15"/>
<path class="v" stroke="#ff0000" d="M48 391v3M49 390v1M49 394v1M50 395v1M53 390v1M54 391v3M55 394v4M56 398v8M57 394v4M58 391v3M59 390v1M62 395v1M63 390v1M63 394v1M64 391v3M149 299v1M155 299v1M157 297v1M159 295v1M161 293v1M163 291v1M165 289v1M167 287v1M169 285v1M170 283v1M172 281v1M174 279v1M176 277v1M178 275v1M180 273v1M182 271v1M184 269v1M186 155v5M186 267v1M187 154v1M187 160v1M188 153v1M188 161v1M188 265v1M190 263v1M192 261v1M194 161v1M194 259v1M195 154v1M195 160v1M196 152v1M196 155v5M196 257v1M197 151v1M197 255v1M198 150v1M199 149v1M199 253v1M200 148v1M201 194v1M201 251v1M202 148v4M203 194v1M203 249v1M205 194v1M205 247v1M207 194v1M207 245v1M209 195v1M209 243v1M211 178v1M211 195v1M211 241v1M213 195v1M213 239v1M215 183v1M215 195v1M215 237v1M217 183v1M217 195v1M217 235v1M219 183v1M219 195v1M219 233v1M221 184v1M221 195v1M221 231v1M223 184v1M223 195v1M223 229v1M224 227v1M225 184v1M225 196v1M226 225v1M227 184v1M227 196v1M228 223v1M229 185v1M229 196v1M230 221v1M231 185v1M231 196v1M232 219v1M233 185v1M233 196v1M234 217v1M235 185v1M235 196v1M236 215v1M237 186v1M237 196v1M238 213v1M239 186v1M239 196v1M240 211v1M241 186v1M241 197v1M242 209v1M243 186v1M243 197v1M244 207v1M245 187v1M245 197v1M246 205v1M247 187v1M247 197v1M248 203v1M249 187v1M249 197v1M250 201v1M251 187v1M251 197v1M252 199v1M253 188v1M253 197v1M255 188v1M255 195v1M255 197v1M257 188v1M257 193v1M257 198v1M259 188v1M259 191v1M259 198v1M261 189v1M261 198v1M263 187v1M263 189v1M263 198v1M265 185v1M265 189v1M265 198v1M267 183v1M267 189v1M267 198v1M269 181v1M269 190v1M269 198v1M271 179v1M271 190v1M271 198v1M273 177v1M273 190v1M273 199v1M275 175v1M275 190v1M275 199v1M277 173v1M277 191v1M277 199v1M279 171v1M279 191v1M279 199v1M280 169v1M281 191v1M281 199v1M282 167v1M283 191v1M283 199v1M284 165v1M285 192v1M285 199v1M286 163v1M287 192v1M287 199v1M288 161v1M289 192v1M289 200v1M290 159v1M291 192v1M291 200v1M292 157v1M293 193v1M293 200v1M294 155v1M295 193v1M295 200v1M297 193v1M297 200v1M299 193v1M299 200v1M301 194v1M301 200v1M303 194v1M303 200v1M305 194v1M305 201v1M307 194v1M307 201v1M309 195v1M309 201v1M311 195v1M311 201v1M313 195v1M313 201v1M315 195v1M315 201v1M317 196v1M317 201v1M319 196v1M319 201v1M321 196v1M321 202v1M323 196v1M323 202v1M325 197v1M325 202v1M327 197v1M327 202v1M328 47v1M329 46v1M329 197v1M329 202v1M330 37v1M330 45v1M331 38v1M331 44v1M331 197v1M331 202v1M332 39v1M332 43v1M333 40v1M333 42v1M333 198v1M333 202v1M334 41v1M335 40v1M335 42v1M335 198v1M335 202v1M336 39v1M336 43v1M337 38v1M337 44v1M337 198v1M337 203v1M338 37v1M338 45v1M339 36v1M339 198v1M339 203v1M340 35v1M341 34v1M341 199v1M341 203v1M342 33v1M343 199v1M343 203v1M344 33v3M345 199v1M345 203v1M347 199v1M347 203v1M349 200v1M349 203v1M351 200v1M351 203v1M353 200v1M353 204v1M354 431v2M355 200v1M355 204v1M355 429v2M356 427v2M356 437v1M357 201v1M357 204v1M357 424v3M358 422v2M359 201v1M359 204v1M359 420v2M360 418v1M361 201v1M361 204v1M361 415v2M361 470v1M362 412v3M362 468v2M363 201v1M363 204v1M363 410v2M363 466v2M364 408v2M364 460v1M364 464v2M365 202v1M365 204v1M365 406v1M365 461v3M366 404v1M367 202v1M367 204v1M367 400v1M367 402v1M368 398v2M369 202v1M369 205v1M369 396v2M370 394v1M371 202v1M371 205v1M371 392v1M371 459v12M371 472v2M372 388v1M372 390v1M372 458v1M373 203v1M373 205v1M373 386v1M373 457v1M374 384v1M375 203v1M375 205v1M375 382v1M376 380v1M377 203v1M377 205v1M377 376v1M377 378v1M378 374v1M379 203v1M379 205v1M379 371v2M380 369v2M381 204v2M381 368v1M381 371v1M382 364v1M382 366v1M382 369v1M383 204v2M383 362v1M384 359v2M385 204v1M385 206v1M385 357v2M386 355v2M386 359v1M387 204v1M387 206v1M387 352v3M387 357v1M388 350v1M388 355v1M389 205v2M389 347v2M389 353v1M390 345v2M391 205v2M391 343v2M391 347v1M392 340v3M392 345v1M393 205v2M393 338v2M393 343v1M394 335v3M394 341v1M395 205v2M395 333v2M395 339v1M396 331v2M396 335v1M396 337v1M397 206v1M397 328v3M397 333v1M398 326v2M398 331v1M399 206v1M399 323v3M399 329v1M400 321v2M400 327v1M401 206v2M401 319v2M401 325v1M402 316v3M402 323v1M403 206v2M403 314v2M403 319v1M403 321v1M404 311v3M404 317v1M405 309v2M405 315v1M406 307v2M406 313v1M407 207v1M407 304v3M407 311v1M408 302v2M408 309v1M409 299v3M409 307v1M410 297v2M410 303v1M410 305v1M411 295v2M411 301v1M412 292v3M412 299v1M413 290v2M413 297v1M414 203v1M414 287v3M414 295v1M415 285v2M415 293v1M416 283v2M416 291v1M417 280v3M417 287v1M417 289v1M418 278v2M418 285v1M419 275v3M419 283v1M420 273v2M420 281v1M421 271v2M421 279v1M422 268v3M422 277v1M423 266v2M423 275v1M424 263v3M424 271v1M424 273v1M425 261v2M425 269v1M426 259v2M426 267v1M427 256v3M427 265v1M428 254v2M428 263v1M429 182v5M429 251v3M429 261v1M430 180v2M430 187v2M430 249v2M430 259v1M431 179v1M431 189v1M431 247v2M431 255v1M431 257v1M432 178v1M432 190v1M432 246v1M432 253v1M433 251v1M437 184v1M442 178v1M442 190v1M443 179v1M443 189v1M444 180v2M444 187v2M445 182v5M497 465v1M498 466v1M499 457v5M499 467v1M500 456v1M500 462v1M500 466v1M501 455v1M501 463v3M502 454v1M508 454v1M509 455v1M509 463v3M510 456v1M510 462v1M510 466v1M511 457v5M511 467v1M512 468v1M513 469v1M744 106v1M744 114v1M744 149v1M744 151v2M744 194v1M744 239v3M744 281v2M745 107v1M745 113v1M745 189v1M745 193v1M745 238v1M745 242v1M745 280v1M745 283v1M745 292v1M746 108v2M746 111v2M746 190v1M746 192v1M746 290v2M747 151v2M747 191v1M747 288v2M748 190v1M748 192v1M748 240v1M748 280v1M748 283v1M749 149v2M749 189v1M749 193v1M749 279v1M749 281v2M750 108v2M750 111v2M750 188v1M750 278v1M750 287v6M750 294v1M751 107v1M751 113v1M751 238v1M751 242v1M751 286v1M752 106v1M752 114v1M752 149v2M752 152v1M752 188v1M752 239v3M752 278v1"/>
<path class="h" stroke="#00ff00" d="M746 127h6M88 130h2M94 130h2M746 133h6M91 134h2M97 134h2M88 140h2M94 140h2M91 144h2M97 144h2M749 168h3M540 197h5M143 201h9M534 203h7M544 203h7M750 206h2M146 207h3M534 207h17M744 207h2M748 207h2M750 209h2M146 211h3M460 217h5M460 225h5M233 228h2M458 229h9M467 233h5M467 241h5M465 245h9M747 257h3M747 261h3M746 263h5M747 266h3M747 270h3M746 272h5M746 309h5M747 312h3M332 372h2M328 377h2M324 382h2M323 383h2M320 387h2M319 388h2M317 391h2M316 392h2M315 393h2M314 394h2M313 396h2M312 397h2M311 398h2M310 399h2M309 401h2M308 402h2M307 403h2M306 404h2M305 405h2M305 406h2M304 407h2M303 408h2M302 409h2M301 411h2M300 412h2M299 413h2M298 414h2M296 417h2M295 418h2M294 419h2M292 422h2M291 423h2M290 424h2M287 428h2M286 429h2M283 433h2M258 553h11M258 565h11"/>
<path class="v" stroke="#00ff00" d="M85 135v1M85 145v1M86 133v2M86 143v2M87 132v1M87 142v1M88 131v1M88 141v1M89 129v1M89 139v1M90 131v3M90 141v3M91 135v1M91 145v1M92 133v1M92 143v1M93 132v1M93 142v1M94 131v1M94 141v1M95 129v1M95 139v1M96 131v3M96 141v3M97 135v1M97 145v1M98 133v1M98 143v1M99 132v1M99 142v1M100 130v2M100 140v2M101 129v1M101 139v1M141 195v1M141 205v1M142 196v1M142 204v1M143 197v4M143 202v2M145 208v3M147 199v2M147 202v5M149 208v3M151 197v4M151 202v2M152 196v1M152 204v1M153 195v1M153 205v1M172 219v1M173 235v1M177 234v1M178 225v1M180 223v1M180 229v1M181 234v1M182 233v1M183 224v1M183 237v1M185 233v1M185 241v1M186 224v1M187 245v1M189 224v1M189 233v1M189 249v1M191 253v1M192 224v1M193 232v1M193 257v1M194 261v1M195 225v1M196 265v1M197 232v1M198 225v1M198 269v1M200 273v1M201 225v1M201 231v1M202 277v1M204 225v1M204 281v1M205 231v1M205 285v1M207 226v1M207 289v1M209 230v1M209 293v1M210 226v1M211 297v1M213 226v1M213 230v1M213 301v1M215 305v1M216 226v1M216 309v1M217 229v1M218 313v1M219 227v1M220 317v1M221 229v1M222 227v1M222 321v1M224 325v1M225 227v1M225 229v1M226 329v1M227 333v1M228 227v1M229 228v1M229 337v1M231 228v1M231 341v1M233 345v1M235 349v1M237 227v2M237 353v1M238 357v1M240 228v1M240 361v1M241 227v1M242 365v1M243 229v1M244 369v1M245 226v1M246 229v1M246 373v1M248 377v1M249 226v1M249 229v1M249 381v1M251 385v1M252 229v1M253 225v1M253 389v1M255 230v1M255 393v1M256 551v1M256 567v1M257 225v1M257 397v1M257 552v1M257 566v1M258 230v1M259 401v1M260 405v1M260 554v11M261 224v1M261 230v1M262 409v1M264 231v1M264 413v1M265 224v1M266 417v1M266 554v11M267 231v1M268 421v1M269 223v1M269 552v1M269 566v1M270 231v1M270 425v1M270 551v1M270 567v1M271 429v1M273 223v1M273 231v1M273 433v1M275 437v1M276 232v1M277 222v1M277 441v1M278 440v1M279 232v1M279 438v2M280 437v1M281 222v1M281 436v1M282 232v1M282 435v1M283 434v1M284 432v1M285 222v1M285 232v1M285 431v1M286 430v1M288 233v1M288 427v1M289 221v1M289 426v1M290 425v1M291 233v1M293 221v1M293 421v1M294 233v1M294 420v1M297 220v1M297 233v1M297 416v1M298 415v1M300 234v1M301 220v1M302 410v1M303 234v1M305 219v1M306 234v1M309 219v1M309 234v1M309 400v1M311 400v1M312 235v1M313 218v1M313 395v1M315 235v1M315 395v1M317 218v1M317 390v1M318 235v1M318 389v1M319 390v1M320 386v1M320 389v1M321 217v1M321 235v1M321 385v1M322 384v1M322 386v1M323 385v1M324 236v1M324 381v1M324 384v1M325 217v1M325 380v1M326 379v1M326 381v1M327 236v1M327 378v1M327 380v1M328 376v1M328 379v1M329 216v1M329 375v1M329 378v1M330 236v1M330 374v1M330 376v1M331 373v1M331 375v1M332 371v1M332 374v1M333 216v1M333 236v1M333 370v1M333 373v1M334 369v1M334 371v1M335 368v1M335 370v1M336 237v1M336 366v2M336 369v1M337 215v1M337 365v1M337 368v1M338 364v1M338 366v2M339 237v1M339 362v2M339 365v1M340 361v1M340 364v1M341 215v1M341 360v1M341 363v1M342 237v1M342 359v1M342 361v2M343 357v2M343 360v1M344 356v1M344 359v1M345 214v1M345 237v1M345 355v1M345 358v1M346 354v1M346 357v1M347 352v2M347 355v2M348 238v1M348 351v1M348 354v1M349 214v1M349 350v1M349 353v1M350 349v1M350 352v1M351 238v1M351 347v2M351 350v2M352 346v1M352 349v1M353 214v1M353 345v1M353 348v1M354 238v1M354 343v2M354 347v1M355 342v1M355 345v2M356 341v1M356 344v1M357 213v1M357 239v1M357 340v1M357 343v1M358 338v2M358 342v1M359 337v1M359 341v1M360 239v1M360 336v1M360 339v2M361 213v1M361 335v1M361 338v1M362 333v2M362 337v1M363 239v1M363 332v1M363 336v1M364 331v1M364 334v2M365 212v1M365 330v1M365 333v1M366 239v1M366 328v2M366 332v1M367 327v1M367 331v1M368 326v1M368 330v1M369 212v1M369 240v1M369 325v1M369 328v2M370 323v2M370 327v1M371 322v1M371 326v1M372 240v1M372 321v1M372 325v1M373 211v1M373 319v2M373 323v2M374 318v1M374 322v1M375 240v1M375 317v1M375 321v1M376 316v1M376 320v1M377 211v1M377 314v2M377 319v1M378 240v1M378 313v1M378 317v2M379 312v1M379 316v1M380 311v1M380 315v1M381 210v1M381 241v1M381 309v2M381 314v1M382 308v1M382 312v2M383 307v1M383 311v1M384 241v1M384 306v1M384 310v1M385 210v1M385 304v2M385 309v1M386 303v1M386 308v1M387 241v1M387 302v1M387 306v2M388 301v1M388 305v1M389 209v1M389 299v2M389 304v1M390 241v1M390 298v1M390 303v1M391 297v1M391 301v2M392 295v2M392 300v1M393 209v1M393 242v1M393 294v1M393 299v1M394 293v1M394 298v1M395 292v1M395 297v1M396 242v1M396 290v2M396 295v2M397 208v1M397 289v1M397 294v1M398 288v1M398 293v1M399 242v1M399 287v1M399 292v1M400 285v2M400 290v2M401 208v1M401 284v1M401 289v1M402 242v1M402 283v1M402 288v1M403 282v1M403 287v1M404 280v2M404 286v1M405 207v1M405 243v1M405 279v1M405 284v2M406 278v1M406 283v1M407 276v2M407 282v1M408 243v1M408 275v1M408 281v1M409 207v1M409 274v1M409 279v2M410 273v1M410 278v1M411 243v1M411 271v2M411 277v1M412 270v1M412 276v1M413 269v1M413 275v1M414 243v1M414 268v1M414 273v2M415 266v2M415 272v1M416 265v1M416 271v1M417 244v1M417 264v1M417 270v1M418 263v1M418 268v2M419 261v2M419 267v1M420 244v1M420 260v1M420 266v1M421 259v1M421 265v1M422 258v1M422 264v1M423 244v1M423 256v2M423 262v2M424 255v1M424 261v1M425 254v1M425 260v1M426 244v1M426 252v2M427 251v1M428 250v1M428 256v1M429 245v1M429 249v1M429 255v1M430 247v2M430 254v1M431 246v1M431 253v1M432 251v2M433 250v1M438 243v1M439 247v1M458 215v1M458 219v5M459 216v1M459 218v1M459 224v1M462 226v3M462 230v2M465 216v1M465 218v1M465 224v1M465 235v5M466 215v1M466 219v5M466 234v1M466 240v1M469 242v3M469 246v4M472 234v1M472 240v1M473 235v5M538 199v3M539 198v1M539 202v1M545 198v1M545 202v1M546 199v3M745 126v1M745 134v1M745 167v7M745 206v1M745 208v3M745 306v1M745 311v1M746 166v1M746 211v3M746 256v1M746 258v3M746 267v3M746 307v2M746 310v1M747 128v5M747 167v7M747 208v3M747 313v1M748 166v1M748 206v1M748 262v1M748 264v1M748 271v1M748 273v2M748 308v1M748 310v2M748 314v1M749 167v1M749 169v4M749 174v1M749 208v1M749 313v1M750 128v5M750 173v1M750 256v1M750 258v3M750 267v3M750 307v2M750 310v1M751 167v1M751 169v4M751 174v1M751 210v1M751 214v1M751 306v1M751 311v1M752 126v1M752 134v1M752 207v2M752 211v3"/>
<path class="h" stroke="#ffff00" d="M205 48h3M194 49h2M201 49h2M205 54h3M747 118h3M747 124h3M747 156h3M750 196h3M751 197h2M745 297h5M749 299h2M747 300h2M564 331h2M561 333h2M266 471h9M274 475h3M270 477h3M133 500h2M140 500h2M135 501h5M133 502h2M140 502h2M133 512h2M140 512h2M135 513h5"/>
<path class="v" stroke="#ffff00" d="M131 497v1M131 505v5M132 498v2M132 503v2M132 510v2M142 498v2M142 503v2M142 510v2M143 497v1M143 505v5M170 235v1M172 232v1M173 229v1M175 226v1M177 223v1M193 50v1M195 48v1M195 50v7M196 57v1M197 58v5M198 57v1M199 52v5M200 51v1M201 48v1M201 50v1M202 51v1M203 50v1M203 52v1M204 49v1M204 53v1M206 55v1M207 56v1M207 64v1M208 49v1M208 53v1M208 57v1M208 63v1M209 50v3M209 58v5M270 469v2M270 472v5M270 478v6M273 476v1M276 447v1M276 481v3M277 476v1M277 480v1M277 484v1M278 477v3M278 485v1M294 149v1M432 245v1M433 246v2M434 248v2M551 328v1M552 329v1M553 330v13M554 329v1M555 328v1M556 329v1M557 330v13M558 329v1M559 328v1M560 329v1M561 330v3M561 334v7M561 344v1M562 341v1M562 343v1M563 332v1M563 342v1M564 341v1M564 343v1M565 330v1M565 332v9M565 344v1M744 162v1M744 204v1M745 116v1M745 120v3M745 158v3M745 163v1M745 199v1M745 203v1M746 117v1M746 119v1M746 123v1M746 157v1M746 161v2M746 200v1M746 202v1M747 201v1M747 296v1M747 298v2M747 301v3M748 200v1M748 202v1M749 199v1M749 203v1M750 117v1M750 119v1M750 123v1M750 157v1M750 161v2M750 198v1M750 302v2M751 116v1M751 120v3M751 158v3M751 163v1M751 300v2M751 304v1M752 164v1M752 198v1"/>
<path class="h" stroke="#0000ff" d="M467 97h3M465 101h2M327 114h3M327 118h3M324 121h2M331 121h2M326 122h5M324 126h9M746 137h6M746 143h6M170 161h3M175 161h5M182 161h3M173 166h2M180 166h2M175 167h5M173 171h9M750 184h2M134 212h5M139 213h2M745 217h2M748 217h2M747 218h2M750 218h2M745 222h2M748 222h2M747 223h2M750 223h2M139 227h2M134 228h5M746 246h3M749 247h2M749 253h2M746 254h3M31 262h17M744 317h2M747 317h3M751 317h2M747 320h3M746 322h5M747 330h3M746 332h5M395 535h5M392 536h3M401 537h3M391 541h3M401 543h3M391 547h3M400 548h3M395 549h5"/>
<path class="v" stroke="#0000ff" d="M31 254v1M31 270v1M32 255v1M32 269v1M33 256v1M33 268v1M34 257v2M34 266v2M35 259v3M35 263v3M43 259v3M43 263v3M44 257v2M44 266v2M45 256v1M45 268v1M46 255v1M46 269v1M47 254v1M47 270v1M132 214v1M132 226v1M133 213v1M133 215v1M133 225v1M133 227v1M134 216v1M134 224v1M135 217v2M135 222v2M136 219v3M141 214v1M141 226v1M142 215v1M142 225v1M143 216v2M143 223v2M144 218v5M165 233v1M171 159v2M171 162v2M172 164v2M177 159v2M177 162v5M177 168v3M177 172v4M182 164v2M183 159v2M183 162v2M197 189v1M277 438v3M278 432v6M279 426v6M280 419v7M281 413v6M282 407v6M283 400v7M284 394v6M285 388v6M286 382v6M287 375v7M288 369v6M289 363v6M290 356v7M291 350v6M292 344v6M293 337v7M294 331v6M295 325v6M296 318v7M297 312v6M298 306v6M299 299v7M300 293v6M301 287v6M302 281v6M303 274v7M304 268v6M305 262v6M306 255v7M307 249v6M308 243v6M309 236v7M310 230v6M311 224v6M312 217v7M313 211v6M314 205v6M315 199v2M315 202v3M316 192v7M317 186v6M318 180v6M319 173v7M320 167v6M321 161v6M322 114v5M322 158v3M323 119v2M323 151v1M326 115v3M328 123v3M328 127v4M330 115v3M333 119v2M334 114v5M389 539v1M389 543v3M390 538v1M390 542v1M390 546v1M391 537v1M394 542v1M394 546v1M394 548v1M395 543v3M399 539v3M400 536v1M400 538v1M400 542v1M403 547v1M404 538v1M404 542v1M404 546v1M405 539v3M405 545v1M453 85v1M454 86v1M455 87v13M456 86v1M457 85v1M458 86v1M459 87v13M460 86v1M461 85v1M462 86v1M463 87v13M464 100v1M467 100v1M468 96v1M468 98v2M744 176v1M744 219v1M744 224v1M745 136v1M745 144v1M745 177v7M745 218v1M745 223v1M745 247v1M745 253v1M745 316v1M745 318v1M745 326v3M746 176v1M746 216v1M746 221v1M746 248v1M746 252v1M746 319v1M746 329v1M747 138v5M747 177v7M747 219v1M747 224v1M747 249v3M747 327v1M748 176v1M748 316v1M748 318v2M748 321v1M748 323v2M748 326v1M748 328v1M748 331v1M748 333v2M749 177v7M749 216v1M749 221v1M749 327v1M750 138v5M750 219v1M750 224v1M750 248v1M750 252v1M750 319v1M750 329v1M751 217v1M751 222v1M751 249v3M751 316v1M751 318v1M751 326v3M752 136v1M752 144v1M752 182v2M752 216v1M752 221v1"/>
<path class="h" stroke="#00ffff" d="M324 159h2M329 163h2M330 164h2M334 167h2M335 168h2M336 169h2M339 171h2M340 172h2M341 173h2M344 175h2M345 176h2M346 177h2M347 178h2M349 179h2M350 180h2M351 181h2M352 182h2M354 183h2M355 184h2M356 185h2M357 186h2M358 187h3M360 188h2M361 189h2M362 190h2M363 191h3M364 192h3M366 193h2M367 194h2M368 195h3M369 196h3M371 197h2M372 198h2M373 199h3M375 201h3M377 202h2M382 206h2M383 207h3M386 210h3M388 211h3M392 215h4M397 219h4M404 223h2M403 224h2M409 227h2M408 228h2M414 231h2M414 233h2M419 235h2M420 238h2M424 239h2M425 242h2M429 243h2"/>
<path class="v" stroke="#00ffff" d="M322 157v1M323 158v1M326 160v1M327 161v1M328 162v1M332 165v1M333 166v1M338 170v1M343 174v1M374 200v1M376 200v1M378 203v1M379 204v1M380 203v1M380 205v1M382 205v1M384 208v1M385 209v1M386 208v1M387 209v1M389 212v1M390 213v1M391 212v1M391 214v1M392 213v1M393 214v1M394 216v1M395 217v1M396 216v1M396 218v1M397 217v1M398 218v1M399 220v1M400 221v1M401 220v1M401 222v1M402 221v1M402 223v1M403 222v1M405 225v1M406 224v1M406 226v1M407 225v1M407 227v1M408 226v1M410 229v1M411 228v1M411 230v1M412 229v1M412 231v1M413 230v1M413 232v1M416 232v1M416 234v1M417 233v1M417 235v1M418 234v1M418 236v1M419 237v1M421 236v1M422 237v1M422 239v1M423 238v1M423 240v1M424 241v1M426 240v1M427 241v1M427 243v1M428 242v1M428 244v1M430 246v1M431 244v1M432 247v1M433 248v1"/>
<path class="h" stroke="#ffffff" d="M283 15h33M270 16h13M316 16h13M262 17h8M329 17h8M255 18h7M337 18h7M249 19h6M344 19h6M244 20h5M350 20h5M239 21h5M355 21h5M235 22h4M360 22h4M231 23h4M364 23h4M227 24h4M368 24h4M223 25h4M372 25h4M220 26h3M376 26h3M216 27h4M379 27h4M213 28h3M383 28h3M210 29h3M386 29h3M207 30h3M389 30h3M204 31h3M392 31h3M201 32h3M395 32h3M199 33h2M398 33h2M196 34h3M400 34h3M194 35h2M403 35h2M191 36h3M405 36h3M189 37h2M408 37h2M186 38h3M410 38h3M184 39h2M413 39h2M182 40h2M415 40h2M180 41h2M417 41h2M178 42h2M419 42h2M176 43h2M421 43h2M173 44h3M423 44h3M171 45h2M426 45h2M168 47h2M429 47h2M166 48h2M431 48h2M164 49h2M433 49h2M162 50h2M435 50h2M160 51h2M437 51h2M158 52h2M439 52h2M155 54h2M442 54h2M153 55h2M444 55h2M150 57h2M447 57h2M148 58h2M449 58h2M145 60h2M284 60h31M452 60h2M273 61h11M315 61h11M142 62h2M265 62h8M326 62h8M455 62h2M259 63h6M334 63h6M139 64h2M253 64h6M340 64h6M458 64h2M249 65h4M346 65h4M136 66h2M244 66h5M350 66h5M461 66h2M240 67h4M355 67h4M236 68h4M359 68h4M132 69h2M233 69h3M363 69h3M465 69h2M229 70h4M366 70h4M226 71h3M370 71h3M128 72h2M223 72h3M373 72h3M469 72h2M220 73h3M376 73h3M218 74h2M379 74h2M124 75h2M215 75h3M285 75h29M381 75h3M473 75h2M212 76h3M273 76h12M314 76h11M384 76h3M210 77h2M266 77h8M325 77h8M387 77h2M207 78h4M260 78h6M333 78h6M389 78h4M119 79h2M205 79h2M255 79h5M339 79h5M392 79h2M478 79h2M203 80h2M250 80h5M344 80h6M394 80h2M200 81h3M246 81h4M349 81h4M396 81h3M198 82h2M242 82h4M353 82h4M399 82h2M196 83h2M238 83h4M357 83h4M401 83h2M113 84h2M194 84h2M234 84h4M361 84h3M403 84h2M484 84h2M192 85h2M232 85h3M364 85h3M405 85h2M190 86h2M229 86h3M367 86h3M407 86h2M188 87h2M226 87h3M370 87h3M409 87h2M186 88h2M223 88h3M373 88h3M411 88h2M184 89h2M220 89h3M376 89h3M413 89h2M218 90h2M379 90h2M181 91h2M215 91h3M381 91h3M416 91h2M179 92h2M213 92h2M384 92h2M418 92h2M103 93h2M177 93h2M210 93h3M385 93h4M420 93h2M494 93h2M208 94h2M389 94h2M174 95h2M206 95h2M391 95h2M423 95h2M204 96h2M393 96h2M171 97h2M202 97h2M395 97h2M426 97h2M169 98h2M200 98h2M397 98h2M428 98h2M198 99h2M399 99h2M429 99h2M166 100h2M196 100h2M401 100h2M431 100h2M194 101h2M403 101h2M163 102h2M192 102h2M405 102h2M434 102h2M190 103h2M407 103h2M188 104h2M409 104h2M159 105h2M286 105h27M438 105h2M185 106h2M275 106h11M313 106h11M412 106h2M183 107h2M268 107h7M324 107h7M414 107h2M155 108h2M263 108h5M331 108h5M442 108h2M180 109h2M258 109h5M336 109h5M417 109h2M178 110h2M254 110h4M341 110h4M419 110h2M151 111h2M250 111h4M345 111h4M446 111h2M175 112h2M246 112h4M349 112h4M422 112h2M243 113h3M353 113h3M172 114h2M240 114h3M356 114h3M425 114h2M146 115h2M237 115h3M359 115h3M451 115h2M234 116h3M362 116h3M168 117h2M231 117h3M365 117h3M429 117h2M228 118h3M368 118h3M226 119h2M371 119h2M164 120h2M224 120h2M373 120h2M433 120h2M139 121h2M221 121h3M375 121h3M458 121h2M219 122h2M378 122h2M160 123h2M217 123h2M380 123h2M437 123h2M215 124h2M382 124h2M213 125h2M384 125h2M462 125h2M211 126h2M386 126h2M155 127h2M209 127h2M388 127h2M442 127h2M207 128h2M390 128h2M205 129h2M392 129h2M203 130h2M394 130h2M524 130h2M200 132h2M397 132h2M198 133h2M399 133h2M520 133h2M147 134h2M450 134h2M195 135h2M402 135h2M452 135h2M124 136h2M452 136h2M516 136h2M192 137h2M405 137h2M189 139h2M408 139h2M512 139h2M130 141h2M186 141h2M411 141h2M508 142h2M182 144h2M415 144h2M135 145h2M471 145h2M504 145h2M135 146h2M178 147h2M419 147h2M500 148h2M173 151h2M424 151h2M496 151h2M113 154h2M492 154h2M490 155h2M117 157h2M488 157h2M121 160h3M484 160h2M480 163h2M473 164h2M478 164h2M98 169h2M467 169h2M100 170h2M118 170h2M103 172h2M122 173h2M106 174h2M461 174h2M500 174h2M125 175h2M498 175h2M109 176h2M495 177h2M129 178h2M455 179h2M492 179h2M132 180h2M489 180h3M135 182h2M139 185h2M38 188h2M89 188h2M40 189h2M91 189h2M42 190h2M93 190h2M44 191h2M95 191h2M46 192h3M97 192h2M510 192h2M49 193h2M99 193h2M426 193h2M508 193h2M51 194h2M506 194h2M53 195h3M423 195h2M504 195h2M56 196h2M502 196h2M58 197h2M500 197h2M60 198h2M419 198h2M62 199h3M65 200h2M67 201h2M69 202h3M72 203h2M74 204h2M76 205h2M78 206h3M81 207h3M84 208h2M86 209h3M89 210h3M520 210h2M92 211h2M518 211h2M516 212h2M513 213h3M511 214h2M509 215h2M507 216h2M72 225h2M149 225h2M74 226h3M151 226h2M77 227h2M153 227h2M79 228h3M155 228h2M82 229h3M157 229h2M85 230h2M159 230h2M527 230h2M523 231h4M519 232h4M515 233h4M513 234h2M66 245h2M445 245h14M68 246h4M72 247h4M76 248h4M80 249h2M531 250h3M526 251h5M521 252h5M518 253h3M578 265h4M62 266h4M570 266h8M66 267h8M563 267h7M74 268h4M555 268h8M548 269h7M540 270h8M533 271h7M525 272h8M521 273h4M60 287h16M523 292h16M75 299h31M131 299h13M493 299h31M60 306h16M523 311h16M74 325h4M66 326h8M59 327h7M51 328h8M44 329h7M36 330h8M521 330h4M29 331h7M525 331h8M21 332h8M533 332h4M17 333h4M78 345h3M73 346h5M68 347h5M65 348h3M517 349h2M519 350h4M523 351h4M527 352h4M531 353h2M84 364h2M80 365h4M76 366h4M72 367h4M70 368h2M512 368h2M514 369h3M517 370h2M519 371h3M522 372h3M525 373h2M90 382h2M88 383h2M86 384h2M83 385h3M81 386h2M79 387h2M505 387h2M77 388h2M507 388h3M510 389h2M512 390h3M515 391h3M518 392h3M521 393h2M523 394h2M525 395h2M527 396h3M530 397h2M532 398h2M534 399h3M537 400h2M97 401h2M539 401h2M95 402h2M541 402h2M93 403h2M543 403h3M91 404h2M546 404h2M89 405h2M498 405h2M548 405h2M87 406h2M500 406h2M550 406h3M502 407h2M553 407h2M504 408h2M555 408h2M506 409h2M557 409h2M508 410h2M559 410h2M458 413h2M462 416h2M107 418h3M465 418h2M105 419h2M142 419h2M102 421h2M469 421h2M488 422h2M99 423h2M472 423h2M97 424h2M136 424h2M491 424h2M475 425h2M494 426h2M479 428h2M497 428h2M130 429h2M499 429h2M118 434h3M124 434h2M114 437h2M475 438h2M477 439h2M110 440h2M481 442h2M106 443h3M485 445h2M102 446h2M173 447h2M424 447h2M98 449h2M178 451h2M419 451h2M94 452h2M462 452h2M126 453h2M462 453h2M182 454h2M415 454h2M90 455h2M186 457h2M411 457h2M467 457h2M86 458h2M189 459h2M408 459h2M82 461h2M192 461h2M405 461h2M145 462h2M473 462h2M145 463h2M195 463h2M402 463h2M78 464h2M147 464h2M450 464h2M198 465h2M399 465h2M200 466h2M397 466h2M74 467h2M203 468h2M394 468h2M205 469h2M392 469h2M207 470h2M390 470h2M155 471h2M209 471h2M388 471h2M442 471h2M211 472h2M386 472h2M135 473h2M213 473h2M384 473h2M215 474h2M382 474h2M160 475h2M217 475h2M380 475h2M437 475h2M219 476h2M378 476h2M139 477h2M221 477h3M375 477h3M458 477h2M164 478h2M224 478h2M373 478h2M433 478h2M226 479h2M371 479h2M228 480h3M368 480h3M168 481h2M231 481h3M365 481h3M429 481h2M234 482h3M362 482h3M146 483h2M237 483h3M359 483h3M451 483h2M172 484h2M240 484h3M356 484h3M425 484h2M243 485h3M353 485h3M175 486h2M246 486h4M349 486h4M422 486h2M151 487h2M250 487h4M345 487h4M446 487h2M178 488h2M254 488h4M341 488h4M419 488h2M180 489h2M258 489h5M336 489h5M417 489h2M155 490h2M263 490h5M331 490h5M442 490h2M183 491h2M268 491h7M324 491h7M414 491h2M185 492h2M275 492h11M313 492h11M412 492h2M159 493h2M286 493h27M438 493h2M188 494h2M409 494h2M190 495h2M407 495h2M163 496h2M192 496h2M405 496h2M434 496h2M194 497h2M403 497h2M166 498h2M196 498h2M401 498h2M431 498h2M168 499h2M198 499h2M399 499h2M169 500h2M200 500h2M397 500h2M428 500h2M171 501h2M202 501h2M395 501h2M426 501h2M204 502h2M393 502h2M174 503h2M206 503h2M391 503h2M423 503h2M208 504h2M389 504h2M103 505h2M177 505h2M210 505h4M386 505h3M420 505h2M494 505h2M179 506h2M213 506h2M384 506h2M418 506h2M181 507h2M215 507h3M381 507h3M416 507h2M218 508h2M379 508h2M184 509h2M220 509h3M376 509h3M413 509h2M186 510h2M223 510h3M373 510h3M411 510h2M188 511h2M226 511h3M370 511h3M409 511h2M190 512h2M229 512h3M367 512h3M407 512h2M192 513h2M232 513h3M364 513h3M405 513h2M113 514h2M194 514h2M235 514h3M361 514h4M403 514h2M484 514h2M196 515h2M238 515h4M357 515h4M401 515h2M198 516h2M242 516h4M353 516h4M399 516h2M200 517h3M246 517h4M349 517h4M396 517h3M203 518h2M249 518h6M344 518h5M394 518h2M119 519h2M205 519h2M255 519h5M339 519h5M392 519h2M478 519h2M206 520h4M260 520h6M333 520h6M388 520h4M210 521h2M266 521h8M325 521h8M387 521h2M212 522h3M274 522h11M314 522h12M384 522h3M124 523h2M215 523h3M285 523h29M381 523h3M473 523h2M218 524h2M379 524h2M220 525h3M376 525h3M128 526h2M223 526h3M373 526h3M469 526h2M226 527h3M370 527h3M229 528h4M366 528h4M132 529h2M233 529h3M363 529h3M465 529h2M236 530h4M359 530h4M240 531h4M355 531h4M136 532h2M244 532h5M350 532h5M461 532h2M249 533h4M346 533h4M139 534h2M253 534h6M340 534h6M458 534h2M259 535h6M334 535h6M142 536h2M265 536h8M326 536h8M455 536h2M273 537h11M315 537h11M145 538h2M284 538h31M452 538h2M148 540h2M449 540h2M150 541h2M447 541h2M153 543h2M444 543h2M155 544h2M442 544h2M158 546h2M439 546h2M160 547h2M437 547h2M162 548h2M435 548h2M164 549h2M433 549h2M166 550h2M431 550h2M168 551h2M429 551h2M171 553h2M426 553h2M173 554h3M423 554h3M176 555h2M421 555h2M178 556h2M419 556h2M180 557h2M417 557h2M182 558h2M415 558h2M184 559h2M413 559h2M186 560h3M410 560h3M189 561h2M408 561h2M191 562h3M405 562h3M194 563h2M403 563h2M196 564h3M400 564h3M199 565h2M398 565h2M201 566h3M395 566h3M204 567h3M392 567h3M207 568h3M389 568h3M210 569h3M386 569h3M213 570h3M383 570h3M216 571h4M379 571h4M220 572h3M376 572h3M223 573h4M372 573h4M227 574h4M368 574h4M231 575h4M364 575h4M235 576h4M360 576h4M239 577h5M355 577h5M244 578h5M350 578h5M249 579h6M344 579h6M255 580h7M337 580h7M262 581h8M329 581h8M270 582h13M316 582h13M283 583h33"/>
<path class="v" stroke="#ffffff" d="M15 283v33M16 270v13M16 316v13M17 262v8M17 329v4M17 334v3M18 255v7M18 337v7M19 249v6M19 344v6M20 244v5M20 350v5M21 239v5M21 355v5M22 235v4M22 360v4M23 231v4M23 364v4M24 227v4M24 368v4M25 223v4M25 372v4M26 220v3M26 376v3M27 216v4M27 379v4M28 213v3M28 383v3M29 210v3M29 386v3M30 207v3M30 389v3M31 204v3M31 392v3M32 201v3M32 395v3M33 199v2M33 398v2M34 196v3M34 400v3M35 194v2M35 403v2M36 191v3M36 405v3M37 189v2M37 408v2M38 186v2M38 410v3M39 184v2M39 413v2M40 182v2M40 415v2M41 180v2M41 417v2M42 178v2M42 419v2M43 176v2M43 421v2M44 173v3M44 423v3M45 171v2M45 426v2M46 170v1M46 428v1M47 168v2M47 429v2M48 166v2M48 431v2M49 164v2M49 433v2M50 162v2M50 435v2M51 160v2M51 437v2M52 158v2M52 439v2M53 157v1M53 441v1M54 155v2M54 442v2M55 153v2M55 444v2M56 152v1M56 446v1M57 150v2M57 447v2M58 148v2M58 449v2M59 147v1M59 451v1M60 145v2M60 284v3M60 288v18M60 307v8M60 452v2M61 144v1M61 273v11M61 315v11M61 454v1M62 142v2M62 265v1M62 267v6M62 326v1M62 328v6M62 455v2M63 141v1M63 259v6M63 334v6M63 457v1M64 139v2M64 253v6M64 340v6M64 458v2M65 138v1M65 249v4M65 346v2M65 349v1M65 460v1M66 136v2M66 244v1M66 246v3M66 350v5M66 461v2M67 135v1M67 240v4M67 355v4M67 463v1M68 134v1M68 236v4M68 359v4M68 464v1M69 132v2M69 233v3M69 363v3M69 465v2M70 131v1M70 229v4M70 366v2M70 369v1M70 467v1M71 130v1M71 226v3M71 370v3M71 468v1M72 128v2M72 223v2M72 373v3M72 469v2M73 127v1M73 220v3M73 376v3M73 468v1M73 471v1M74 126v1M74 218v2M74 379v2M74 472v1M75 124v2M75 215v3M75 285v2M75 288v11M75 300v6M75 307v7M75 381v3M75 473v2M76 123v1M76 212v3M76 274v11M76 314v11M76 384v3M76 466v1M76 475v1M77 122v1M77 210v2M77 266v2M77 269v5M77 326v7M77 387v1M77 465v1M77 476v1M78 121v1M78 207v3M78 260v6M78 333v6M78 389v3M78 477v1M79 119v2M79 205v1M79 255v5M79 339v5M79 392v2M79 478v2M80 118v1M80 203v2M80 250v5M80 344v1M80 346v3M80 394v2M80 463v1M80 480v1M81 117v1M81 200v3M81 246v3M81 349v4M81 396v3M81 462v1M81 481v1M82 116v1M82 198v2M82 242v4M82 353v4M82 399v2M82 482v1M83 115v1M83 196v2M83 238v4M83 357v4M83 401v2M83 483v1M84 113v2M84 194v2M84 235v3M84 361v3M84 403v2M84 460v1M84 484v2M85 112v1M85 192v2M85 232v3M85 365v2M85 405v2M85 459v1M85 486v1M86 111v1M86 190v2M86 229v1M86 231v1M86 367v3M86 407v2M86 487v1M87 110v1M87 188v2M87 226v3M87 370v3M87 409v2M87 488v1M88 109v1M88 186v2M88 223v3M88 373v3M88 411v2M88 457v1M88 489v1M89 108v1M89 184v2M89 220v3M89 376v3M89 413v2M89 456v1M89 490v1M90 107v1M90 183v1M90 218v2M90 379v2M90 415v1M90 491v1M91 106v1M91 181v2M91 215v3M91 381v1M91 383v1M91 416v2M91 492v1M92 105v1M92 179v2M92 213v2M92 384v2M92 418v2M92 454v1M92 493v1M93 103v2M93 177v2M93 210v1M93 212v1M93 386v3M93 420v2M93 453v1M93 494v2M94 102v1M94 176v1M94 208v2M94 389v2M94 422v1M94 496v1M95 101v1M95 174v2M95 206v2M95 391v2M95 423v2M95 497v1M96 100v1M96 173v1M96 204v2M96 393v2M96 425v1M96 451v1M96 498v1M97 99v1M97 171v2M97 202v2M97 395v2M97 426v2M97 450v1M97 499v1M98 98v1M98 170v1M98 200v2M98 397v2M98 428v2M98 500v1M99 97v1M99 168v1M99 198v2M99 399v2M99 430v1M99 501v1M100 96v1M100 166v2M100 196v2M100 401v2M100 431v2M100 448v1M100 502v1M101 95v1M101 165v1M101 194v2M101 403v2M101 422v1M101 433v1M101 447v1M101 503v1M102 94v1M102 163v2M102 171v1M102 192v2M102 405v2M102 434v2M102 504v1M103 162v1M103 190v2M103 407v2M103 436v1M104 161v1M104 188v2M104 409v2M104 420v1M104 437v1M104 445v1M105 92v1M105 159v2M105 173v1M105 187v1M105 286v13M105 300v13M105 411v1M105 438v2M105 444v1M105 506v1M106 91v1M106 158v1M106 185v2M106 275v11M106 313v11M106 412v2M106 440v1M106 507v1M107 90v1M107 157v1M107 183v2M107 268v7M107 324v7M107 414v2M107 441v1M107 508v1M108 89v1M108 155v2M108 175v1M108 182v1M108 263v5M108 331v5M108 416v1M108 442v1M108 509v1M109 88v1M109 154v1M109 180v2M109 258v5M109 336v5M109 417v1M109 441v1M109 444v1M109 510v1M110 87v1M110 153v1M110 178v2M110 254v4M110 341v4M110 419v2M110 445v1M110 511v1M111 86v1M111 151v2M111 177v1M111 250v4M111 345v4M111 421v1M111 446v2M111 512v1M112 85v1M112 150v1M112 153v1M112 175v2M112 246v4M112 349v4M112 422v2M112 439v1M112 448v1M112 513v1M113 149v1M113 174v1M113 243v3M113 353v3M113 424v1M113 438v1M113 449v1M114 148v1M114 172v2M114 240v3M114 356v3M114 425v2M114 450v1M115 83v1M115 146v2M115 155v1M115 171v1M115 237v3M115 359v3M115 427v1M115 451v2M115 515v1M116 82v1M116 145v1M116 156v1M116 170v1M116 234v3M116 362v3M116 428v1M116 436v1M116 453v1M116 516v1M117 81v1M117 144v1M117 168v2M117 231v3M117 365v3M117 429v2M117 435v1M117 454v1M117 517v1M118 80v1M118 143v1M118 167v1M118 228v3M118 368v3M118 431v1M118 455v1M118 518v1M119 142v1M119 158v1M119 166v1M119 226v2M119 371v2M119 432v1M119 456v1M120 141v1M120 159v1M120 164v2M120 171v1M120 224v2M120 373v2M120 433v1M120 457v1M121 78v1M121 139v2M121 163v1M121 172v1M121 221v3M121 375v3M121 435v1M121 458v2M121 520v1M122 77v1M122 138v1M122 162v1M122 219v2M122 378v2M122 436v1M122 457v1M122 460v1M122 521v1M123 76v1M123 137v1M123 161v1M123 217v2M123 380v2M123 435v1M123 437v2M123 456v1M123 461v1M123 522v1M124 159v1M124 174v1M124 215v2M124 382v2M124 439v1M124 455v1M124 462v1M125 135v1M125 158v1M125 213v2M125 384v2M125 440v1M125 454v1M125 463v1M126 74v1M126 134v1M126 137v1M126 157v1M126 211v2M126 386v2M126 433v1M126 441v1M126 464v1M126 524v1M127 73v1M127 133v1M127 138v1M127 155v2M127 176v1M127 209v2M127 388v2M127 432v1M127 442v2M127 465v1M127 525v1M128 132v1M128 139v1M128 154v1M128 177v1M128 207v2M128 390v2M128 431v1M128 444v1M128 452v1M128 466v1M129 131v1M129 140v1M129 153v1M129 205v2M129 392v2M129 430v1M129 445v1M129 451v1M129 467v1M130 71v1M130 73v1M130 130v1M130 152v1M130 203v2M130 394v2M130 446v1M130 450v1M130 468v1M130 527v1M131 70v1M131 74v2M131 129v1M131 151v1M131 179v1M131 202v1M131 396v1M131 447v1M131 449v1M131 469v1M131 528v1M132 76v1M132 128v1M132 142v1M132 150v1M132 200v2M132 397v2M132 428v1M132 448v1M132 470v1M133 77v1M133 127v1M133 143v1M133 149v1M133 198v2M133 399v2M133 427v1M133 449v1M133 471v1M134 68v1M134 78v2M134 126v1M134 144v1M134 147v2M134 181v1M134 197v1M134 401v1M134 426v1M134 450v2M134 472v1M134 530v1M135 67v1M135 80v1M135 125v1M135 195v2M135 402v2M135 425v1M135 452v1M135 531v1M136 81v1M136 124v1M136 194v1M136 404v1M136 453v1M136 474v1M137 82v2M137 123v1M137 144v1M137 183v1M137 192v2M137 405v2M137 454v1M137 472v1M137 475v1M138 65v1M138 84v1M138 122v1M138 143v1M138 184v1M138 191v1M138 407v1M138 423v1M138 455v1M138 471v1M138 476v1M138 533v1M139 85v1M139 142v1M139 189v2M139 408v2M139 422v1M139 456v1M139 470v1M140 86v2M140 141v1M140 188v1M140 410v1M140 421v1M140 457v1M140 469v1M141 63v1M141 88v1M141 120v1M141 122v1M141 140v1M141 186v1M141 411v2M141 420v1M141 458v1M141 467v2M141 478v1M141 535v1M142 89v1M142 119v1M142 123v1M142 139v1M142 185v1M142 413v1M142 459v1M142 466v1M142 479v1M143 90v2M143 118v1M143 124v1M143 138v1M143 184v1M143 414v1M143 460v1M143 465v1M143 480v1M144 61v1M144 92v1M144 117v1M144 125v1M144 137v1M144 182v2M144 415v2M144 418v1M144 461v1M144 464v1M144 481v1M144 537v1M145 93v1M145 116v1M145 126v2M145 136v1M145 181v1M145 482v1M146 94v2M146 128v1M146 135v1M146 180v1M146 418v1M147 59v1M147 96v1M147 129v1M147 178v2M147 419v2M147 539v1M148 97v1M148 114v1M148 130v1M148 177v1M148 421v1M148 484v1M149 98v2M149 113v1M149 131v1M149 133v1M149 176v1M149 422v1M149 465v1M149 485v1M150 100v1M150 112v1M150 132v1M150 175v1M150 423v1M150 466v1M150 486v1M151 101v1M151 131v1M151 173v2M151 424v2M151 467v1M152 56v1M152 102v2M152 130v1M152 172v1M152 426v1M152 468v1M152 542v1M153 104v1M153 110v1M153 129v1M153 171v1M153 427v1M153 469v1M153 485v2M153 488v1M154 105v1M154 109v1M154 128v1M154 170v1M154 428v1M154 470v1M154 484v1M154 489v1M155 106v2M155 169v1M155 429v1M155 483v1M156 168v1M156 430v1M156 481v2M157 53v1M157 107v1M157 109v1M157 126v1M157 167v1M157 431v1M157 472v1M157 480v1M157 491v1M157 545v1M158 106v1M158 110v2M158 125v1M158 166v1M158 432v1M158 473v1M158 479v1M158 492v1M159 112v1M159 124v1M159 165v1M159 433v1M159 474v1M159 477v2M160 113v1M160 164v1M160 434v1M160 476v1M161 104v1M161 114v2M161 163v1M161 435v1M161 494v1M162 103v1M162 116v1M162 122v1M162 162v1M162 436v1M162 476v1M162 495v1M163 117v1M163 121v1M163 161v1M163 437v1M163 477v1M164 118v2M164 160v1M164 438v1M165 101v1M165 159v1M165 439v1M165 497v1M166 119v1M166 158v1M166 440v1M166 479v1M167 118v1M167 157v1M167 441v1M167 480v1M168 99v1M168 156v1M168 442v1M169 155v1M169 443v1M170 46v1M170 116v1M170 154v1M170 444v1M170 482v1M170 497v2M170 552v1M171 115v1M171 153v1M171 445v1M171 483v1M171 496v1M172 152v1M172 446v1M172 494v2M173 96v1M173 493v1M173 502v1M174 97v2M174 113v1M174 485v1M174 491v2M175 99v2M175 150v1M175 448v1M175 490v1M176 94v1M176 101v1M176 149v1M176 449v1M176 488v2M176 504v1M177 102v2M177 111v1M177 148v1M177 450v1M177 487v1M178 104v1M179 105v2M180 107v2M180 146v1M180 452v1M181 145v1M181 453v1M182 108v1M182 490v1M183 90v1M183 508v1M184 143v1M184 455v1M185 142v1M185 176v1M185 456v1M186 177v1M187 105v1M187 178v1M187 493v1M188 140v1M188 179v1M188 458v1M188 508v2M188 559v1M189 180v2M189 506v2M189 557v2M190 182v1M190 504v2M190 555v2M191 138v1M191 183v1M191 460v1M191 502v2M191 553v2M192 87v2M192 184v1M192 500v2M192 550v3M193 89v2M193 185v1M193 498v2M193 548v2M194 91v2M194 136v1M194 462v1M194 546v2M195 93v2M195 543v3M196 95v2M196 541v2M197 97v2M197 134v1M197 464v1M197 539v2M198 537v2M199 100v1M199 534v3M200 101v2M200 532v2M201 103v2M201 163v1M201 530v2M202 105v2M202 131v1M202 164v2M202 467v1M202 527v3M203 107v2M203 166v1M203 525v2M204 109v2M204 167v1M204 523v2M205 111v2M205 168v2M205 521v2M206 113v2M206 170v1M206 518v1M207 115v2M207 171v2M207 515v3M208 117v2M208 173v1M208 512v3M209 119v2M209 510v2M210 121v2M210 507v3M211 79v2M211 123v2M211 506v1M212 81v2M213 83v3M214 86v2M214 503v2M215 88v2M215 500v3M216 90v1M216 498v2M217 495v3M218 492v3M219 490v2M220 487v3M221 485v2M222 482v3M223 480v2M225 525v1M226 522v3M227 519v3M228 517v2M229 514v3M230 71v1M230 513v1M231 72v4M232 76v4M233 80v4M245 531v1M246 527v4M247 523v4M248 519v4M250 66v2M251 68v5M252 73v5M253 78v2M265 18v3M266 21v8M266 533v3M267 29v7M267 525v8M268 36v8M268 522v3M269 44v7M270 51v8M271 59v3M271 63v3M272 66v8M273 74v2M287 524v14M291 76v14M292 61v14M292 90v15M293 131v13M306 494v14M306 524v14M307 508v15M311 61v14M324 143v3M325 137v6M325 523v2M326 134v3M326 525v8M327 533v3M327 537v3M328 540v8M329 548v7M330 74v3M330 555v8M331 66v8M331 563v7M332 63v3M332 570v8M333 578v3M345 519v2M346 521v5M347 526v5M348 531v2M350 76v4M351 72v4M352 68v4M353 67v1M358 443v2M359 445v2M360 447v2M361 449v2M362 451v2M363 453v2M365 515v4M366 519v4M367 523v4M368 85v1M368 527v1M369 82v3M370 79v3M371 77v2M372 74v3M373 73v1M375 117v2M376 114v3M377 112v2M378 109v3M379 106v3M380 104v2M381 101v3M382 99v2M382 508v1M383 96v3M383 509v2M384 94v2M384 511v2M385 513v3M386 516v2M387 92v1M387 474v2M387 518v2M388 89v3M388 476v2M389 86v3M389 478v2M390 84v2M390 480v2M391 81v3M391 482v2M392 80v1M392 484v2M393 76v2M393 486v2M394 74v2M394 488v2M395 72v2M395 490v2M396 69v3M396 131v1M396 467v1M396 492v2M397 67v2M397 494v2M398 65v2M398 496v2M399 62v3M399 498v1M400 60v2M401 58v2M401 134v1M401 464v1M401 500v2M402 56v2M402 502v2M403 53v3M403 504v2M404 51v2M404 136v1M404 462v1M404 506v2M405 49v2M405 99v2M405 508v2M406 46v3M406 97v2M406 510v2M407 44v2M407 95v2M407 138v1M407 460v1M408 42v2M408 93v2M409 40v2M409 91v2M410 39v1M410 89v2M410 140v1M410 458v1M411 105v1M411 493v1M413 142v1M413 456v1M414 143v1M414 455v1M415 90v1M415 508v1M416 108v1M416 490v1M417 145v1M417 453v1M418 146v1M418 199v1M418 452v1M418 490v2M419 492v2M420 494v1M421 111v1M421 148v1M421 197v1M421 450v1M421 487v1M421 495v2M422 94v1M422 109v2M422 149v1M422 196v1M422 449v1M422 497v1M422 504v1M423 108v1M423 150v1M423 448v1M423 498v2M424 106v2M424 113v1M424 485v1M424 500v2M425 96v1M425 105v1M425 194v1M425 502v1M426 103v2M426 152v1M426 446v1M427 102v1M427 115v1M427 153v1M427 445v1M427 483v1M428 46v1M428 100v2M428 116v1M428 154v1M428 192v1M428 444v1M428 482v1M428 552v1M429 155v1M429 443v1M430 156v1M430 442v1M430 499v1M431 118v1M431 157v1M431 441v1M431 480v1M432 119v1M432 158v1M432 440v1M432 479v1M433 101v1M433 159v1M433 439v1M433 497v1M434 160v1M434 438v1M434 479v1M435 121v1M435 161v1M435 437v1M435 477v1M435 480v2M436 103v1M436 122v1M436 162v1M436 436v1M436 476v1M436 482v1M436 495v1M437 104v1M437 163v1M437 435v1M437 483v1M437 494v1M438 121v2M438 164v1M438 434v1M438 484v2M439 120v1M439 124v1M439 165v1M439 433v1M439 474v1M439 486v1M440 106v1M440 119v1M440 125v1M440 166v1M440 432v1M440 473v1M440 487v1M440 492v1M441 53v1M441 107v1M441 117v2M441 126v1M441 167v1M441 431v1M441 472v1M441 488v2M441 491v1M441 545v1M442 116v1M442 168v1M442 430v1M443 115v1M443 169v1M443 241v1M443 429v1M443 491v1M444 109v1M444 113v2M444 128v1M444 170v1M444 239v2M444 428v1M444 470v1M444 489v1M444 492v2M445 110v1M445 112v1M445 129v1M445 171v1M445 237v2M445 427v1M445 469v1M445 488v1M445 494v1M446 56v1M446 130v1M446 172v1M446 236v1M446 426v1M446 468v1M446 495v1M446 542v1M447 131v1M447 173v2M447 234v2M447 424v2M447 467v1M447 496v2M448 112v1M448 132v1M448 175v1M448 233v1M448 423v1M448 466v1M448 486v1M448 498v1M449 113v1M449 133v1M449 176v1M449 231v2M449 422v1M449 465v1M449 467v1M449 485v1M449 499v1M450 114v1M450 177v1M450 229v2M450 421v1M450 468v1M450 484v1M450 500v2M451 59v1M451 178v2M451 228v1M451 419v2M451 469v1M451 502v1M451 539v1M452 180v1M452 418v1M452 463v1M452 470v1M452 503v1M453 116v1M453 417v1M453 462v1M453 471v2M453 482v1M453 504v2M454 61v1M454 117v1M454 134v1M454 137v1M454 180v1M454 182v2M454 415v2M454 461v1M454 473v1M454 481v1M454 506v1M454 537v1M455 118v1M455 133v1M455 138v1M455 184v1M455 414v1M455 460v1M455 474v1M455 480v1M455 507v1M456 119v1M456 132v1M456 139v1M456 185v1M456 413v1M456 459v1M456 475v1M456 479v1M456 508v2M457 63v1M457 120v1M457 130v2M457 140v1M457 178v1M457 186v2M457 412v1M457 458v1M457 476v1M457 478v1M457 510v1M457 535v1M458 129v1M458 141v1M458 177v1M458 188v1M458 410v1M458 457v1M458 511v1M459 128v1M459 142v1M459 176v1M459 189v2M459 408v2M459 456v1M459 512v2M460 65v1M460 122v1M460 127v1M460 143v1M460 175v1M460 191v1M460 407v1M460 414v1M460 455v1M460 476v1M460 514v1M460 533v1M461 123v1M461 126v1M461 144v1M461 192v2M461 405v2M461 415v1M461 454v1M461 475v1M461 515v1M462 124v1M462 145v1M462 194v1M462 404v1M462 474v1M462 516v2M463 67v1M463 146v1M463 173v1M463 195v2M463 402v2M463 473v1M463 518v1M463 531v1M464 68v1M464 126v1M464 147v2M464 172v1M464 197v1M464 401v1M464 417v1M464 450v2M464 454v1M464 472v1M464 519v1M464 530v1M465 127v1M465 149v1M465 171v1M465 198v2M465 399v2M465 449v1M465 455v1M465 471v1M465 520v2M466 128v1M466 150v1M466 170v1M466 200v2M466 397v2M466 448v1M466 456v1M466 470v1M466 522v1M467 70v1M467 129v1M467 149v1M467 151v1M467 202v1M467 396v1M467 419v1M467 447v1M467 469v1M467 523v1M467 528v1M468 71v1M468 130v1M468 148v1M468 152v1M468 203v2M468 394v2M468 420v1M468 446v1M468 468v1M468 524v2M468 527v1M469 131v1M469 147v1M469 153v1M469 168v1M469 205v2M469 392v2M469 445v1M469 458v1M469 467v1M470 132v1M470 146v1M470 154v1M470 167v1M470 207v2M470 390v2M470 444v1M470 459v1M470 466v1M471 73v1M471 133v1M471 155v2M471 166v1M471 209v2M471 388v2M471 422v1M471 442v2M471 460v1M471 465v1M471 525v1M472 74v1M472 134v1M472 157v1M472 165v1M472 211v2M472 386v2M472 441v1M472 461v1M472 464v1M472 524v1M473 135v1M473 144v1M473 158v1M473 213v2M473 384v2M473 440v1M473 463v1M474 136v1M474 143v1M474 159v1M474 215v2M474 382v2M474 424v1M474 439v1M475 76v1M475 137v1M475 142v1M475 160v2M475 163v1M475 217v2M475 380v2M475 437v1M475 461v1M475 522v1M476 77v1M476 138v1M476 141v1M476 162v1M476 219v2M476 378v2M476 436v1M476 460v1M476 521v1M477 78v1M477 139v2M477 163v1M477 221v3M477 375v3M477 426v1M477 435v1M477 458v2M477 520v1M478 141v1M478 165v1M478 224v2M478 373v2M478 427v1M478 433v2M478 457v1M479 142v1M479 166v1M479 226v2M479 371v2M479 432v1M479 440v1M479 456v1M480 80v1M480 143v1M480 167v1M480 228v3M480 368v3M480 431v1M480 441v1M480 455v1M480 518v1M481 81v1M481 144v1M481 168v2M481 231v3M481 365v3M481 429v2M481 454v1M481 517v1M482 82v1M482 145v1M482 162v1M482 170v1M482 234v3M482 362v3M482 428v1M482 453v1M482 516v1M483 83v1M483 146v2M483 161v1M483 171v1M483 237v3M483 359v3M483 427v1M483 443v1M483 451v2M483 515v1M484 148v1M484 172v2M484 240v3M484 356v3M484 425v2M484 444v1M484 450v1M485 149v1M485 174v1M485 243v3M485 353v3M485 424v1M485 449v1M486 85v1M486 150v1M486 159v1M486 175v2M486 246v4M486 349v4M486 422v2M486 448v1M486 513v1M487 86v1M487 151v2M487 158v1M487 177v1M487 250v4M487 345v4M487 421v1M487 446v2M487 512v1M488 87v1M488 153v1M488 178v2M488 254v4M488 341v4M488 419v2M488 445v1M488 511v1M489 88v1M489 154v1M489 181v1M489 258v5M489 336v5M489 417v2M489 444v1M489 510v1M490 89v1M490 156v1M490 182v1M490 263v5M490 331v5M490 416v1M490 423v1M490 442v2M490 509v1M491 90v1M491 157v1M491 183v2M491 268v7M491 324v7M491 414v2M491 441v1M491 508v1M492 91v1M492 158v1M492 185v2M492 275v11M492 313v11M492 412v2M492 440v1M492 507v1M493 92v1M493 159v2M493 187v1M493 286v13M493 300v13M493 411v1M493 425v1M493 438v2M493 506v1M494 153v1M494 161v1M494 178v1M494 188v2M494 409v2M494 437v1M495 152v1M495 162v1M495 190v2M495 407v2M495 436v1M496 94v1M496 163v2M496 192v2M496 405v2M496 427v1M496 434v2M496 504v1M497 95v1M497 165v1M497 176v1M497 194v2M497 403v2M497 433v1M497 503v1M498 96v1M498 150v1M498 166v2M498 196v2M498 401v2M498 431v2M498 502v1M499 97v1M499 149v1M499 168v1M499 198v2M499 399v2M499 430v1M499 501v1M500 98v1M500 169v2M500 200v2M500 397v2M500 428v1M500 500v1M501 99v1M501 171v2M501 202v2M501 395v2M501 426v2M501 499v1M502 100v1M502 147v1M502 173v1M502 204v2M502 393v2M502 425v1M502 498v1M503 101v1M503 146v1M503 174v2M503 206v2M503 391v2M503 423v2M503 497v1M504 102v1M504 176v1M504 208v2M504 389v2M504 422v1M504 496v1M505 103v2M505 177v2M505 210v3M505 386v1M505 388v1M505 420v2M505 494v2M506 105v1M506 144v1M506 179v2M506 213v2M506 384v2M506 418v2M506 493v1M507 106v1M507 143v1M507 181v2M507 215v1M507 217v1M507 381v3M507 416v2M507 492v1M508 107v1M508 183v1M508 218v2M508 379v2M508 415v1M508 491v1M509 108v1M509 184v2M509 220v3M509 376v3M509 413v2M509 490v1M510 109v1M510 141v1M510 186v2M510 223v3M510 373v3M510 411v2M510 489v1M511 110v1M511 140v1M511 188v2M511 226v3M511 370v3M511 409v2M511 488v1M512 111v1M512 190v2M512 229v3M512 367v1M512 369v1M512 407v2M512 487v1M513 112v1M513 192v2M513 232v2M513 364v3M513 405v2M513 486v1M514 113v2M514 138v1M514 194v2M514 235v3M514 361v3M514 403v2M514 484v2M515 115v1M515 137v1M515 196v2M515 238v4M515 357v4M515 401v2M515 483v1M516 116v1M516 198v2M516 242v4M516 353v4M516 399v2M516 482v1M517 117v1M517 200v3M517 246v4M517 350v3M517 396v3M517 481v1M518 118v1M518 135v1M518 203v2M518 250v3M518 254v1M518 344v5M518 394v2M518 480v1M519 119v2M519 134v1M519 205v2M519 255v5M519 339v5M519 393v1M519 478v2M520 121v1M520 207v3M520 260v6M520 333v6M520 389v3M520 477v1M521 122v1M521 211v1M521 266v7M521 325v5M521 331v2M521 387v2M521 476v1M522 123v1M522 132v1M522 212v3M522 274v11M522 314v11M522 384v3M522 475v1M523 124v2M523 131v1M523 215v3M523 285v7M523 293v6M523 300v11M523 312v2M523 381v3M523 473v2M524 126v1M524 218v2M524 379v2M524 472v1M525 127v1M525 220v3M525 376v3M525 471v1M526 128v2M526 223v3M526 374v2M526 469v2M527 130v1M527 226v3M527 370v3M527 468v1M528 131v1M528 229v1M528 231v2M528 366v4M528 467v1M529 132v2M529 233v3M529 363v3M529 465v2M530 134v1M530 236v4M530 359v4M530 464v1M531 135v1M531 240v4M531 355v4M531 463v1M532 136v2M532 244v5M532 350v3M532 354v1M532 461v2M533 138v1M533 249v1M533 251v2M533 346v4M533 460v1M534 139v2M534 253v6M534 340v6M534 458v2M535 141v1M535 259v6M535 334v6M535 457v1M536 142v2M536 265v6M536 272v1M536 326v6M536 333v1M536 455v2M537 144v1M537 273v11M537 315v11M537 454v1M538 145v2M538 284v8M538 293v18M538 312v3M538 452v2M539 147v1M539 451v1M540 148v2M540 449v2M541 150v2M541 447v2M542 152v1M542 446v1M543 153v2M543 444v2M544 155v2M544 442v2M545 157v1M545 441v1M546 158v2M546 439v2M547 160v2M547 437v2M548 162v2M548 435v2M549 164v2M549 433v2M550 166v2M550 431v2M551 168v2M551 429v2M552 170v1M552 428v1M553 171v2M553 426v2M554 173v3M554 423v3M555 176v2M555 421v2M556 178v2M556 419v2M557 180v2M557 417v2M558 182v2M558 415v2M559 184v2M559 413v2M560 186v3M560 411v2M561 189v2M561 408v2M562 191v3M562 405v3M563 194v2M563 403v2M564 196v3M564 400v3M565 199v2M565 398v2M566 201v3M566 395v3M567 204v3M567 392v3M568 207v3M568 389v3M569 210v3M569 386v3M570 213v3M570 383v3M571 216v4M571 379v4M572 220v3M572 376v3M573 223v4M573 372v4M574 227v4M574 368v4M575 231v4M575 364v4M576 235v4M576 360v4M577 239v5M577 355v5M578 244v5M578 350v5M579 249v6M579 344v6M580 255v7M580 337v7M581 262v3M581 266v4M581 329v8M582 270v13M582 316v13M583 283v33"/>
<text transform="translate(100.5 370.5) scale(0.850 1)" fill="#ff0000" class="hn">1</text>
<text transform="translate(171.5 469.5) scale(0.850 1)" fill="#ffff00" class="hn">2</text>
<text transform="translate(262.5 509.5) scale(0.850 1)" fill="#00ff00" class="hn">3</text>
<text transform="translate(351.5 506.5) scale(0.850 1)" fill="#0000ff" class="hn">4</text>
<text transform="translate(435.5 462.5) scale(0.850 1)" fill="#ff0000" class="hn">5</text>
<text transform="translate(499.5 367.5) scale(0.850 1)" fill="#ffff00" class="hn">6</text>
<text transform="translate(498.5 236.5) scale(0.850 1)" fill="#00ff00" class="hn">7</text>
<text transform="translate(427.5 137.5) scale(0.850 1)" fill="#0000ff" class="hn">8</text>
<text transform="translate(336.5 97.5) scale(0.850 1)" fill="#ff0000" class="hn">9</text>
<text transform="translate(248.1 100.5) scale(0.850 1)" fill="#ffff00" class="hn" letter-spacing="1.43">10</text>
<text transform="translate(164.1 144.5) scale(0.850 1)" fill="#00ff00" class="hn" letter-spacing="1.43">11</text>
<text transform="translate(100.1 239.5) scale(0.850 1)" fill="#0000ff" class="hn" letter-spacing="1.43">12</text>
<text transform="translate(292 128) scale(0.500 1)" fill="#ffff00" class="cu">MC</text>
<text transform="translate(119 308) scale(0.430 1)" fill="#ff0000" class="cu">Asc</text>
</svg>
<div id="side">
<div class="r" style="top:4px"><span style="color:#ffffff">Astrolog 5.40</span></div>
<div class="r" style="top:14px"><span style="color:#bfbfbf">"Anonymous"</span></div>
<div class="r" style="top:24px"><span style="color:#bfbfbf">Fri October 26, 2001</span></div>
<div class="r" style="top:34px"><span style="color:#bfbfbf"> 3:17pm (ST +8:00 GMT)</span></div>
<div class="r" style="top:44px"><span style="color:#bfbfbf">"Taipei"</span></div>
<div class="r" style="top:54px"><span style="color:#bfbfbf">120°57E 24°48N</span></div>
<div class="r" style="top:64px"><span style="color:#bfbfbf">Placidus houses.</span></div>
<div class="r" style="top:74px"><span style="color:#bfbfbf">Tropical, Geocentric.</span></div>
<div class="r" style="top:84px"><span style="color:#bfbfbf">Julian Day = 2452208.8035</span></div>
<div class="r" style="top:104px"><span style="color:#ff0000"> 1st house: </span><span style="color:#0000ff">23Pis06</span></div>
<div class="r" style="top:114px"><span style="color:#ffff00"> 2nd house: </span><span style="color:#ffff00"> 0Tau44</span></div>
<div class="r" style="top:124px"><span style="color:#00ff00"> 3rd house: </span><span style="color:#00ff00"> 0Gem22</span></div>
<div class="r" style="top:134px"><span style="color:#0000ff"> 4th house: </span><span style="color:#00ff00">25Gem21</span></div>
<div class="r" style="top:144px"><span style="color:#ff0000"> 5th house: </span><span style="color:#0000ff">19Can44</span></div>
<div class="r" style="top:154px"><span style="color:#ffff00"> 6th house: </span><span style="color:#ff0000">17Leo34</span></div>
<div class="r" style="top:164px"><span style="color:#00ff00"> 7th house: </span><span style="color:#ffff00">23Vir06</span></div>
<div class="r" style="top:174px"><span style="color:#0000ff"> 8th house: </span><span style="color:#0000ff"> 0Sco44</span></div>
<div class="r" style="top:184px"><span style="color:#ff0000"> 9th house: </span><span style="color:#ff0000"> 0Sag22</span></div>
<div class="r" style="top:194px"><span style="color:#ffff00">10th house: </span><span style="color:#ff0000">25Sag21</span></div>
<div class="r" style="top:204px"><span style="color:#00ff00">11th house: </span><span style="color:#ffff00">19Cap44</span></div>
<div class="r" style="top:214px"><span style="color:#0000ff">12th house: </span><span style="color:#00ff00">17Aqu34</span></div>
<div class="r" style="top:234px"><span style="color:#ff0000"> Sun: </span><span style="color:#0000ff"> 2Sco57</span>  <span style="color:#bfbfbf">- 0°00'</span></div>
<div class="r" style="top:244px"><span style="color:#0000ff">Moon: </span><span style="color:#00ff00">26Aqu41</span>  <span style="color:#bfbfbf">- 4°19'</span></div>
<div class="r" style="top:254px"><span style="color:#00ff00">Merc: </span><span style="color:#00ff00">15Lib10</span>  <span style="color:#bfbfbf">+ 1°46'</span></div>
<div class="r" style="top:264px"><span style="color:#00ff00">Venu: </span><span style="color:#00ff00">13Lib27</span>  <span style="color:#bfbfbf">+ 1°33'</span></div>
<div class="r" style="top:274px"><span style="color:#ff0000">Mars: </span><span style="color:#ffff00">29Cap01</span>  <span style="color:#bfbfbf">- 2°14'</span></div>
<div class="r" style="top:284px"><span style="color:#ff0000">Jupi: </span><span style="color:#0000ff">15Can36</span>  <span style="color:#bfbfbf">- 0°08'</span></div>
<div class="r" style="top:294px"><span style="color:#ffff00">Satu: </span><span style="color:#00ff00">14Gem12</span><span style="color:#ffffff">R</span> <span style="color:#bfbfbf">- 1°52'</span></div>
<div class="r" style="top:304px"><span style="color:#00ff00">Uran: </span><span style="color:#00ff00">20Aqu55</span><span style="color:#ffffff">R</span> <span style="color:#bfbfbf">- 0°44'</span></div>
<div class="r" style="top:314px"><span style="color:#0000ff">Nept: </span><span style="color:#00ff00"> 6Aqu01</span>  <span style="color:#bfbfbf">+ 0°07'</span></div>
<div class="r" style="top:324px"><span style="color:#0000ff">Plut: </span><span style="color:#ff0000">13Sag37</span>  <span style="color:#bfbfbf">+ 9°54'</span></div>
<div class="r" style="top:334px"><span style="color:#007f7f">Node: </span><span style="color:#00ff00">29Gem54</span><span style="color:#ffffff">R</span> <span style="color:#bfbfbf">+ 0°00'</span></div>
<div class="r" style="top:354px"><span style="color:#bfbfbf">Fire: 2, Earth: 1,</span></div>
<div class="r" style="top:364px"><span style="color:#bfbfbf">Air : 7, Water: 3</span></div>
<div class="r" style="top:374px"><span style="color:#bfbfbf">Car: 4, Fix: 4, Mut: 5</span></div>
<div class="r" style="top:384px"><span style="color:#bfbfbf">Yang: 9, Yin: 4</span></div>
<div class="r" style="top:394px"><span style="color:#bfbfbf">M: 8, N: 3, A: 5, D: 6</span></div>
<div class="r" style="top:404px"><span style="color:#bfbfbf">Ang: 4, Suc: 3, Cad: 4</span></div>
<div class="r" style="top:414px"><span style="color:#bfbfbf">Learn: 3, Share: 10</span></div>
</div>
</body></html>
